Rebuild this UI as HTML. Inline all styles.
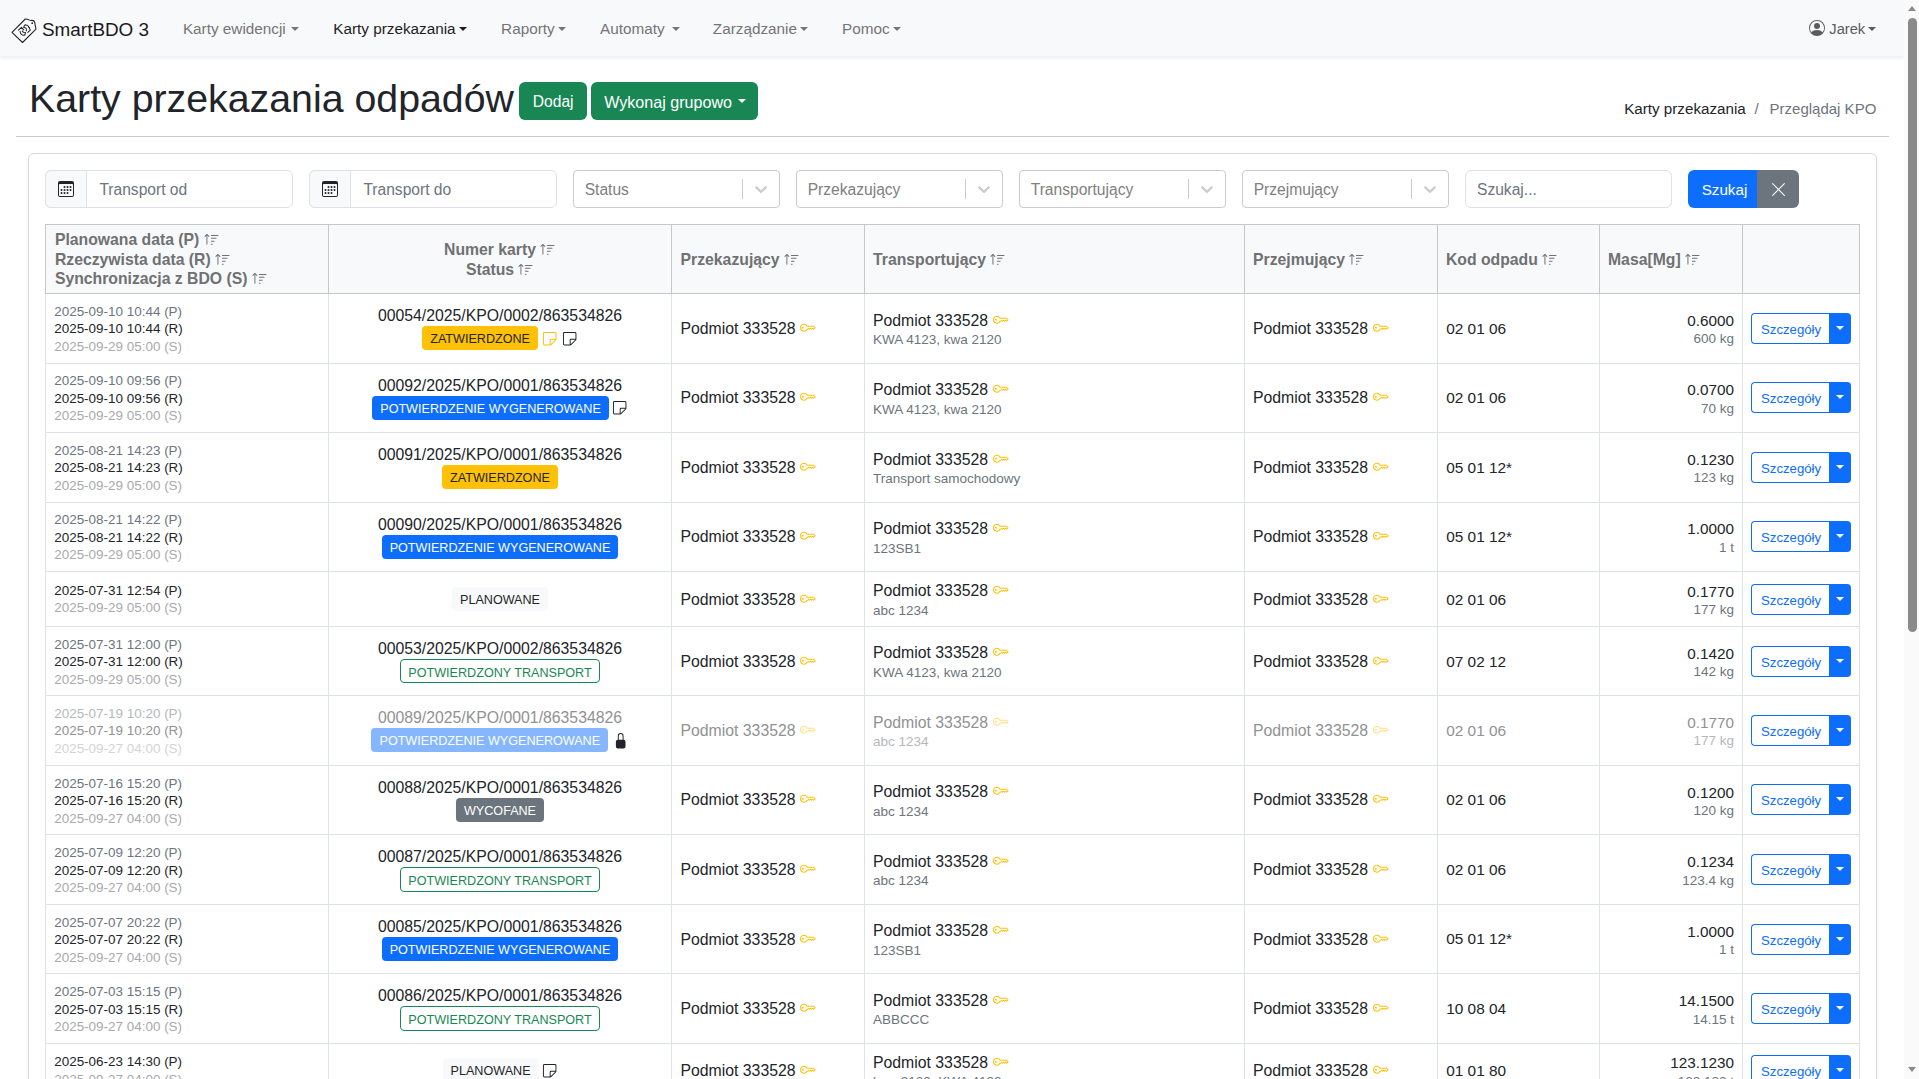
<!DOCTYPE html>
<html><head><meta charset="utf-8"><title>SmartBDO 3</title>
<style>
html,body{margin:0;padding:0;}
body{width:1919px;height:1079px;overflow:hidden;position:relative;background:#fff;font-family:"Liberation Sans", sans-serif;}
.t{position:absolute;white-space:nowrap;}
.badge{display:inline-block;box-sizing:border-box;height:24.4px;line-height:26px;padding:0 8px;font-size:12.6px;border-radius:4px;white-space:nowrap;flex:none}
svg{overflow:visible}
</style></head><body>
<div style="position:absolute;left:0px;top:0px;width:1904px;height:56px;background:#f8f9fa;box-shadow:0 2px 4px rgba(0,0,0,.075);"></div>
<svg style="position:absolute;left:0;top:0" width="48" height="56" viewBox="0 0 48 56" fill="none" stroke="#262626" stroke-width="1.1" stroke-linejoin="round" stroke-linecap="round">
<path d="M12 32.3 L25.3 19 Q26.6 18.8 28 19.4 Q29.5 20.6 31.5 20.4 Q34.2 20.2 34.8 22.4 Q34.9 25 35.7 27.2 Q35.9 28.6 35.7 29.3 L22.5 42.5 Z"/>
<circle cx="32.2" cy="23.2" r="0.9" fill="#262626" stroke="none"/>
<path d="M20.1 31.3 Q20.4 35 23.4 35.3 Q25.6 35.4 25.4 32.4 L23.5 32.3 Q22.6 31.9 22.3 31" stroke-width="1.05"/>
<path d="M18.4 30.2 L21.5 27.3 L23.7 29.9" stroke-width="1.05"/>
<path d="M23.9 27.4 Q23.8 24.6 26.4 24.9 Q28.6 25.3 29.4 28.2" stroke-width="1.05"/>
<path d="M29.0 27.4 L30.3 30.2 L27.8 32.4" stroke-width="1.05"/>
<path d="M24.1 27.5 Q25.9 27.6 26.3 28.6 L26.4 30.8" stroke-width="1.05"/>
</svg>
<div class="t" style="left:42px;top:17.65px;font-size:18.9px;line-height:24px;color:#1a1a1a;font-weight:400;">SmartBDO 3</div>
<div class="t" style="left:182.9px;top:19.10px;font-size:15.3px;line-height:19px;color:#747576;font-weight:400;">Karty ewidencji</div>
<div style="position:absolute;left:291.20000000000005px;top:26.5px;width:0;height:0;border-left:4.8px solid transparent;border-right:4.8px solid transparent;border-top:4.8px solid #747576"></div>
<div class="t" style="left:333.2px;top:19.10px;font-size:15.3px;line-height:19px;color:#1d1e1f;font-weight:400;">Karty przekazania</div>
<div style="position:absolute;left:458.90000000000003px;top:26.5px;width:0;height:0;border-left:4.8px solid transparent;border-right:4.8px solid transparent;border-top:4.8px solid #1d1e1f"></div>
<div class="t" style="left:501.1px;top:19.10px;font-size:15.3px;line-height:19px;color:#747576;font-weight:400;">Raporty</div>
<div style="position:absolute;left:558.3000000000001px;top:26.5px;width:0;height:0;border-left:4.8px solid transparent;border-right:4.8px solid transparent;border-top:4.8px solid #747576"></div>
<div class="t" style="left:600px;top:19.10px;font-size:15.3px;line-height:19px;color:#747576;font-weight:400;">Automaty</div>
<div style="position:absolute;left:671.8000000000001px;top:26.5px;width:0;height:0;border-left:4.8px solid transparent;border-right:4.8px solid transparent;border-top:4.8px solid #747576"></div>
<div class="t" style="left:712.8px;top:19.10px;font-size:15.3px;line-height:19px;color:#747576;font-weight:400;">Zarządzanie</div>
<div style="position:absolute;left:800.3000000000001px;top:26.5px;width:0;height:0;border-left:4.8px solid transparent;border-right:4.8px solid transparent;border-top:4.8px solid #747576"></div>
<div class="t" style="left:842px;top:19.10px;font-size:15.3px;line-height:19px;color:#747576;font-weight:400;">Pomoc</div>
<div style="position:absolute;left:893.2px;top:26.5px;width:0;height:0;border-left:4.8px solid transparent;border-right:4.8px solid transparent;border-top:4.8px solid #747576"></div>
<svg style="position:absolute;left:1809px;top:20px" width="16" height="16" viewBox="0 0 16 16" fill="#5b5c5d"><path d="M11 6a3 3 0 1 1-6 0 3 3 0 0 1 6 0"/><path fill-rule="evenodd" d="M0 8a8 8 0 1 1 16 0A8 8 0 0 1 0 8m8-7a7 7 0 0 0-5.468 11.37C3.242 11.226 4.805 10 8 10s4.757 1.225 5.468 2.37A7 7 0 0 0 8 1"/></svg>
<div class="t" style="left:1829.3px;top:19.91px;font-size:14.7px;line-height:18px;color:#5b5c5d;font-weight:400;">Jarek</div>
<div style="position:absolute;left:1868.3px;top:26.5px;width:0;height:0;border-left:4.6px solid transparent;border-right:4.6px solid transparent;border-top:4.6px solid #5b5c5d"></div>
<div style="position:absolute;left:1904px;top:0px;width:15px;height:1079px;background:#fafafa;"></div>
<div style="position:absolute;left:1908px;top:18px;width:9px;height:614px;background:#8a8a8a;border-radius:5px;"></div>
<div style="position:absolute;left:1908px;top:6px;width:0;height:0;border-left:4.5px solid transparent;border-right:4.5px solid transparent;border-bottom:5px solid #8a8a8a"></div>
<div style="position:absolute;left:1908px;top:1067px;width:0;height:0;border-left:4.5px solid transparent;border-right:4.5px solid transparent;border-top:5px solid #8a8a8a"></div>
<div class="t" style="left:29.0px;top:73.78px;font-size:39.3px;line-height:49px;color:#212529;font-weight:400;">Karty przekazania odpadów</div>
<div style="position:absolute;left:519px;top:82px;width:68px;height:38px;background:#198754;border-radius:6px;"></div>
<div class="t" style="left:532.8px;top:92.49px;font-size:15.6px;line-height:20px;color:#fff;font-weight:400;">Dodaj</div>
<div style="position:absolute;left:591px;top:82px;width:167px;height:38px;background:#198754;border-radius:6px;"></div>
<div class="t" style="left:604.2px;top:92.32px;font-size:16.1px;line-height:20px;color:#fff;font-weight:400;">Wykonaj grupowo</div>
<div style="position:absolute;left:738.3px;top:99px;width:0;height:0;border-left:4.8px solid transparent;border-right:4.8px solid transparent;border-top:4.8px solid #fff"></div>
<div class="t" style="left:1624.2px;top:98.98px;font-size:15.2px;line-height:19px;color:#212529;font-weight:400;">Karty przekazania</div>
<div class="t" style="left:1754.5px;top:98.98px;font-size:15.2px;line-height:19px;color:#6c757d;font-weight:400;">/</div>
<div class="t" style="right:42.700000000000045px;top:99.05px;font-size:15.0px;line-height:19px;color:#6c757d;font-weight:400;">Przeglądaj KPO</div>
<div style="position:absolute;left:16px;top:136px;width:1873px;height:1px;background:#c8c9ca;"></div>
<div style="position:absolute;left:28px;top:153px;width:1849px;height:1047px;border:1px solid #d9d9d9;border-radius:6px;box-sizing:border-box;box-shadow:0 2px 4px rgba(0,0,0,.05);"></div>
<div style="position:absolute;left:45px;top:170px;width:248px;height:38px;border:1px solid #dee2e6;border-radius:6px;box-sizing:border-box;background:#fff;"></div>
<div style="position:absolute;left:45px;top:170px;width:42px;height:38px;border:1px solid #dee2e6;border-radius:6px 0 0 6px;box-sizing:border-box;background:#f8f9fa;"></div>
<svg style="position:absolute;left:58px;top:181px" width="16" height="16" viewBox="0 0 16 16" fill="#212529"><path d="M14 0H2a2 2 0 0 0-2 2v12a2 2 0 0 0 2 2h12a2 2 0 0 0 2-2V2a2 2 0 0 0-2-2M1 3.857C1 3.384 1.448 3 2 3h12c.552 0 1 .384 1 .857v10.286c0 .473-.448.857-1 .857H2c-.552 0-1-.384-1-.857z"/><path d="M6.5 7a1 1 0 1 0 0-2 1 1 0 0 0 0 2m3 0a1 1 0 1 0 0-2 1 1 0 0 0 0 2m3 0a1 1 0 1 0 0-2 1 1 0 0 0 0 2m-9 3a1 1 0 1 0 0-2 1 1 0 0 0 0 2m3 0a1 1 0 1 0 0-2 1 1 0 0 0 0 2m3 0a1 1 0 1 0 0-2 1 1 0 0 0 0 2m3 0a1 1 0 1 0 0-2 1 1 0 0 0 0 2m-9 3a1 1 0 1 0 0-2 1 1 0 0 0 0 2m3 0a1 1 0 1 0 0-2 1 1 0 0 0 0 2m3 0a1 1 0 1 0 0-2 1 1 0 0 0 0 2"/></svg>
<div class="t" style="left:99.4px;top:179.59px;font-size:15.6px;line-height:20px;color:#6c757d;font-weight:400;">Transport od</div>
<div style="position:absolute;left:309px;top:170px;width:248px;height:38px;border:1px solid #dee2e6;border-radius:6px;box-sizing:border-box;background:#fff;"></div>
<div style="position:absolute;left:309px;top:170px;width:42px;height:38px;border:1px solid #dee2e6;border-radius:6px 0 0 6px;box-sizing:border-box;background:#f8f9fa;"></div>
<svg style="position:absolute;left:322px;top:181px" width="16" height="16" viewBox="0 0 16 16" fill="#212529"><path d="M14 0H2a2 2 0 0 0-2 2v12a2 2 0 0 0 2 2h12a2 2 0 0 0 2-2V2a2 2 0 0 0-2-2M1 3.857C1 3.384 1.448 3 2 3h12c.552 0 1 .384 1 .857v10.286c0 .473-.448.857-1 .857H2c-.552 0-1-.384-1-.857z"/><path d="M6.5 7a1 1 0 1 0 0-2 1 1 0 0 0 0 2m3 0a1 1 0 1 0 0-2 1 1 0 0 0 0 2m3 0a1 1 0 1 0 0-2 1 1 0 0 0 0 2m-9 3a1 1 0 1 0 0-2 1 1 0 0 0 0 2m3 0a1 1 0 1 0 0-2 1 1 0 0 0 0 2m3 0a1 1 0 1 0 0-2 1 1 0 0 0 0 2m3 0a1 1 0 1 0 0-2 1 1 0 0 0 0 2m-9 3a1 1 0 1 0 0-2 1 1 0 0 0 0 2m3 0a1 1 0 1 0 0-2 1 1 0 0 0 0 2m3 0a1 1 0 1 0 0-2 1 1 0 0 0 0 2"/></svg>
<div class="t" style="left:363.4px;top:179.59px;font-size:15.6px;line-height:20px;color:#6c757d;font-weight:400;">Transport do</div>
<div style="position:absolute;left:573px;top:170px;width:207px;height:38px;border:1px solid #cccccc;border-radius:4px;box-sizing:border-box;background:#fff;"></div>
<div class="t" style="left:584.7px;top:179.59px;font-size:15.6px;line-height:20px;color:#808080;font-weight:400;">Status</div>
<div style="position:absolute;left:742px;top:179px;width:1px;height:20px;background:#cccccc;"></div>
<svg style="position:absolute;left:751px;top:179px" width="20" height="20" viewBox="0 0 20 20" fill="#cccccc"><path d="M4.516 7.548c0.436-0.446 1.043-0.481 1.576 0l3.908 3.747 3.908-3.747c0.533-0.481 1.141-0.446 1.574 0 0.436 0.445 0.408 1.197 0 1.615-0.406 0.418-4.695 4.502-4.695 4.502-0.217 0.223-0.502 0.335-0.787 0.335s-0.57-0.112-0.789-0.335c0 0-4.287-4.084-4.695-4.502s-0.436-1.17 0-1.615z"/></svg>
<div style="position:absolute;left:796px;top:170px;width:207px;height:38px;border:1px solid #cccccc;border-radius:4px;box-sizing:border-box;background:#fff;"></div>
<div class="t" style="left:807.7px;top:179.59px;font-size:15.6px;line-height:20px;color:#808080;font-weight:400;">Przekazujący</div>
<div style="position:absolute;left:965px;top:179px;width:1px;height:20px;background:#cccccc;"></div>
<svg style="position:absolute;left:974px;top:179px" width="20" height="20" viewBox="0 0 20 20" fill="#cccccc"><path d="M4.516 7.548c0.436-0.446 1.043-0.481 1.576 0l3.908 3.747 3.908-3.747c0.533-0.481 1.141-0.446 1.574 0 0.436 0.445 0.408 1.197 0 1.615-0.406 0.418-4.695 4.502-4.695 4.502-0.217 0.223-0.502 0.335-0.787 0.335s-0.57-0.112-0.789-0.335c0 0-4.287-4.084-4.695-4.502s-0.436-1.17 0-1.615z"/></svg>
<div style="position:absolute;left:1019px;top:170px;width:207px;height:38px;border:1px solid #cccccc;border-radius:4px;box-sizing:border-box;background:#fff;"></div>
<div class="t" style="left:1030.7px;top:179.59px;font-size:15.6px;line-height:20px;color:#808080;font-weight:400;">Transportujący</div>
<div style="position:absolute;left:1188px;top:179px;width:1px;height:20px;background:#cccccc;"></div>
<svg style="position:absolute;left:1197px;top:179px" width="20" height="20" viewBox="0 0 20 20" fill="#cccccc"><path d="M4.516 7.548c0.436-0.446 1.043-0.481 1.576 0l3.908 3.747 3.908-3.747c0.533-0.481 1.141-0.446 1.574 0 0.436 0.445 0.408 1.197 0 1.615-0.406 0.418-4.695 4.502-4.695 4.502-0.217 0.223-0.502 0.335-0.787 0.335s-0.57-0.112-0.789-0.335c0 0-4.287-4.084-4.695-4.502s-0.436-1.17 0-1.615z"/></svg>
<div style="position:absolute;left:1242px;top:170px;width:207px;height:38px;border:1px solid #cccccc;border-radius:4px;box-sizing:border-box;background:#fff;"></div>
<div class="t" style="left:1253.7px;top:179.59px;font-size:15.6px;line-height:20px;color:#808080;font-weight:400;">Przejmujący</div>
<div style="position:absolute;left:1411px;top:179px;width:1px;height:20px;background:#cccccc;"></div>
<svg style="position:absolute;left:1420px;top:179px" width="20" height="20" viewBox="0 0 20 20" fill="#cccccc"><path d="M4.516 7.548c0.436-0.446 1.043-0.481 1.576 0l3.908 3.747 3.908-3.747c0.533-0.481 1.141-0.446 1.574 0 0.436 0.445 0.408 1.197 0 1.615-0.406 0.418-4.695 4.502-4.695 4.502-0.217 0.223-0.502 0.335-0.787 0.335s-0.57-0.112-0.789-0.335c0 0-4.287-4.084-4.695-4.502s-0.436-1.17 0-1.615z"/></svg>
<div style="position:absolute;left:1465px;top:170px;width:207px;height:38px;border:1px solid #dee2e6;border-radius:6px;box-sizing:border-box;background:#fff;"></div>
<div class="t" style="left:1477px;top:179.59px;font-size:15.6px;line-height:20px;color:#6c757d;font-weight:400;">Szukaj...</div>
<div style="position:absolute;left:1688px;top:170px;width:69px;height:38px;background:#0d6efd;border-radius:6px 0 0 6px;"></div>
<div class="t" style="left:1701.7px;top:180.23px;font-size:15.2px;line-height:19px;color:#fff;font-weight:400;">Szukaj</div>
<div style="position:absolute;left:1757px;top:170px;width:42px;height:38px;background:#6c757d;border-radius:0 6px 6px 0;"></div>
<svg style="position:absolute;left:1769.9px;top:180.5px" width="17" height="17" viewBox="0 0 16 16" fill="#fff"><path d="M2.146 2.854a.5.5 0 1 1 .708-.708L8 7.293l5.146-5.147a.5.5 0 0 1 .708.708L8.707 8l5.147 5.146a.5.5 0 0 1-.708.708L8 8.707l-5.146 5.147a.5.5 0 0 1-.708-.708L7.293 8z"/></svg>
<div style="position:absolute;left:45px;top:224px;width:1815px;height:69px;background:#f8f9fa;"></div>
<div style="position:absolute;left:45px;top:293px;width:1px;height:786px;background:#dee2e6;"></div>
<div style="position:absolute;left:328px;top:293px;width:1px;height:786px;background:#dee2e6;"></div>
<div style="position:absolute;left:671px;top:293px;width:1px;height:786px;background:#dee2e6;"></div>
<div style="position:absolute;left:864px;top:293px;width:1px;height:786px;background:#dee2e6;"></div>
<div style="position:absolute;left:1244px;top:293px;width:1px;height:786px;background:#dee2e6;"></div>
<div style="position:absolute;left:1437px;top:293px;width:1px;height:786px;background:#dee2e6;"></div>
<div style="position:absolute;left:1599px;top:293px;width:1px;height:786px;background:#dee2e6;"></div>
<div style="position:absolute;left:1742px;top:293px;width:1px;height:786px;background:#dee2e6;"></div>
<div style="position:absolute;left:1859px;top:293px;width:1px;height:786px;background:#dee2e6;"></div>
<div style="position:absolute;left:45px;top:363px;width:1815px;height:1px;background:#dee2e6;"></div>
<div style="position:absolute;left:45px;top:432px;width:1815px;height:1px;background:#dee2e6;"></div>
<div style="position:absolute;left:45px;top:502px;width:1815px;height:1px;background:#dee2e6;"></div>
<div style="position:absolute;left:45px;top:571px;width:1815px;height:1px;background:#dee2e6;"></div>
<div style="position:absolute;left:45px;top:626px;width:1815px;height:1px;background:#dee2e6;"></div>
<div style="position:absolute;left:45px;top:695px;width:1815px;height:1px;background:#dee2e6;"></div>
<div style="position:absolute;left:45px;top:765px;width:1815px;height:1px;background:#dee2e6;"></div>
<div style="position:absolute;left:45px;top:834px;width:1815px;height:1px;background:#dee2e6;"></div>
<div style="position:absolute;left:45px;top:904px;width:1815px;height:1px;background:#dee2e6;"></div>
<div style="position:absolute;left:45px;top:973px;width:1815px;height:1px;background:#dee2e6;"></div>
<div style="position:absolute;left:45px;top:1043px;width:1815px;height:1px;background:#dee2e6;"></div>
<div style="position:absolute;left:45px;top:1097px;width:1815px;height:1px;background:#dee2e6;"></div>
<div style="position:absolute;left:45px;top:224px;width:1px;height:69px;background:#c6c7c8;"></div>
<div style="position:absolute;left:328px;top:224px;width:1px;height:69px;background:#c6c7c8;"></div>
<div style="position:absolute;left:671px;top:224px;width:1px;height:69px;background:#c6c7c8;"></div>
<div style="position:absolute;left:864px;top:224px;width:1px;height:69px;background:#c6c7c8;"></div>
<div style="position:absolute;left:1244px;top:224px;width:1px;height:69px;background:#c6c7c8;"></div>
<div style="position:absolute;left:1437px;top:224px;width:1px;height:69px;background:#c6c7c8;"></div>
<div style="position:absolute;left:1599px;top:224px;width:1px;height:69px;background:#c6c7c8;"></div>
<div style="position:absolute;left:1742px;top:224px;width:1px;height:69px;background:#c6c7c8;"></div>
<div style="position:absolute;left:1859px;top:224px;width:1px;height:69px;background:#c6c7c8;"></div>
<div style="position:absolute;left:45px;top:224px;width:1815px;height:1px;background:#c6c7c8;"></div>
<div style="position:absolute;left:45px;top:293px;width:1815px;height:1px;background:#c6c7c8;"></div>
<div class="t" style="left:54.9px;top:229.94px;font-size:15.75px;line-height:20px;color:#6f7173;font-weight:700;">Planowana data (P)<svg width="15.6" height="15.6" viewBox="0 0 16 16" fill="#6f7173" style="vertical-align:-2.6px;margin-left:4.4px"><path d="M3.5 12.5a.5.5 0 0 1-1 0V3.707L1.354 4.854a.5.5 0 1 1-.708-.708l2-1.999.007-.007a.5.5 0 0 1 .7.006l2 2a.5.5 0 1 1-.707.708L3.5 3.707zm3.5-9a.5.5 0 0 1 .5-.5h7a.5.5 0 0 1 0 1h-7a.5.5 0 0 1-.5-.5M7.5 6a.5.5 0 0 0 0 1h5a.5.5 0 0 0 0-1zm0 3a.5.5 0 0 0 0 1h3a.5.5 0 0 0 0-1zm0 3a.5.5 0 0 0 0 1h1a.5.5 0 0 0 0-1z"/></svg></div>
<div class="t" style="left:54.9px;top:249.64px;font-size:15.75px;line-height:20px;color:#6f7173;font-weight:700;">Rzeczywista data (R)<svg width="15.6" height="15.6" viewBox="0 0 16 16" fill="#6f7173" style="vertical-align:-2.6px;margin-left:4.4px"><path d="M3.5 12.5a.5.5 0 0 1-1 0V3.707L1.354 4.854a.5.5 0 1 1-.708-.708l2-1.999.007-.007a.5.5 0 0 1 .7.006l2 2a.5.5 0 1 1-.707.708L3.5 3.707zm3.5-9a.5.5 0 0 1 .5-.5h7a.5.5 0 0 1 0 1h-7a.5.5 0 0 1-.5-.5M7.5 6a.5.5 0 0 0 0 1h5a.5.5 0 0 0 0-1zm0 3a.5.5 0 0 0 0 1h3a.5.5 0 0 0 0-1zm0 3a.5.5 0 0 0 0 1h1a.5.5 0 0 0 0-1z"/></svg></div>
<div class="t" style="left:54.9px;top:269.34px;font-size:15.75px;line-height:20px;color:#6f7173;font-weight:700;">Synchronizacja z BDO (S)<svg width="15.6" height="15.6" viewBox="0 0 16 16" fill="#6f7173" style="vertical-align:-2.6px;margin-left:4.4px"><path d="M3.5 12.5a.5.5 0 0 1-1 0V3.707L1.354 4.854a.5.5 0 1 1-.708-.708l2-1.999.007-.007a.5.5 0 0 1 .7.006l2 2a.5.5 0 1 1-.707.708L3.5 3.707zm3.5-9a.5.5 0 0 1 .5-.5h7a.5.5 0 0 1 0 1h-7a.5.5 0 0 1-.5-.5M7.5 6a.5.5 0 0 0 0 1h5a.5.5 0 0 0 0-1zm0 3a.5.5 0 0 0 0 1h3a.5.5 0 0 0 0-1zm0 3a.5.5 0 0 0 0 1h1a.5.5 0 0 0 0-1z"/></svg></div>
<div class="t" style="left:329px;width:342px;text-align:center;top:240.14px;font-size:15.75px;line-height:20px;color:#6f7173;font-weight:700;">Numer karty<svg width="15.6" height="15.6" viewBox="0 0 16 16" fill="#6f7173" style="vertical-align:-2.6px;margin-left:4.4px"><path d="M3.5 12.5a.5.5 0 0 1-1 0V3.707L1.354 4.854a.5.5 0 1 1-.708-.708l2-1.999.007-.007a.5.5 0 0 1 .7.006l2 2a.5.5 0 1 1-.707.708L3.5 3.707zm3.5-9a.5.5 0 0 1 .5-.5h7a.5.5 0 0 1 0 1h-7a.5.5 0 0 1-.5-.5M7.5 6a.5.5 0 0 0 0 1h5a.5.5 0 0 0 0-1zm0 3a.5.5 0 0 0 0 1h3a.5.5 0 0 0 0-1zm0 3a.5.5 0 0 0 0 1h1a.5.5 0 0 0 0-1z"/></svg></div>
<div class="t" style="left:329px;width:342px;text-align:center;top:259.94px;font-size:15.75px;line-height:20px;color:#6f7173;font-weight:700;">Status<svg width="15.6" height="15.6" viewBox="0 0 16 16" fill="#6f7173" style="vertical-align:-2.6px;margin-left:4.4px"><path d="M3.5 12.5a.5.5 0 0 1-1 0V3.707L1.354 4.854a.5.5 0 1 1-.708-.708l2-1.999.007-.007a.5.5 0 0 1 .7.006l2 2a.5.5 0 1 1-.707.708L3.5 3.707zm3.5-9a.5.5 0 0 1 .5-.5h7a.5.5 0 0 1 0 1h-7a.5.5 0 0 1-.5-.5M7.5 6a.5.5 0 0 0 0 1h5a.5.5 0 0 0 0-1zm0 3a.5.5 0 0 0 0 1h3a.5.5 0 0 0 0-1zm0 3a.5.5 0 0 0 0 1h1a.5.5 0 0 0 0-1z"/></svg></div>
<div class="t" style="left:680.6px;top:249.64px;font-size:15.75px;line-height:20px;color:#6f7173;font-weight:700;">Przekazujący<svg width="15.6" height="15.6" viewBox="0 0 16 16" fill="#6f7173" style="vertical-align:-2.6px;margin-left:4.4px"><path d="M3.5 12.5a.5.5 0 0 1-1 0V3.707L1.354 4.854a.5.5 0 1 1-.708-.708l2-1.999.007-.007a.5.5 0 0 1 .7.006l2 2a.5.5 0 1 1-.707.708L3.5 3.707zm3.5-9a.5.5 0 0 1 .5-.5h7a.5.5 0 0 1 0 1h-7a.5.5 0 0 1-.5-.5M7.5 6a.5.5 0 0 0 0 1h5a.5.5 0 0 0 0-1zm0 3a.5.5 0 0 0 0 1h3a.5.5 0 0 0 0-1zm0 3a.5.5 0 0 0 0 1h1a.5.5 0 0 0 0-1z"/></svg></div>
<div class="t" style="left:873px;top:249.64px;font-size:15.75px;line-height:20px;color:#6f7173;font-weight:700;">Transportujący<svg width="15.6" height="15.6" viewBox="0 0 16 16" fill="#6f7173" style="vertical-align:-2.6px;margin-left:4.4px"><path d="M3.5 12.5a.5.5 0 0 1-1 0V3.707L1.354 4.854a.5.5 0 1 1-.708-.708l2-1.999.007-.007a.5.5 0 0 1 .7.006l2 2a.5.5 0 1 1-.707.708L3.5 3.707zm3.5-9a.5.5 0 0 1 .5-.5h7a.5.5 0 0 1 0 1h-7a.5.5 0 0 1-.5-.5M7.5 6a.5.5 0 0 0 0 1h5a.5.5 0 0 0 0-1zm0 3a.5.5 0 0 0 0 1h3a.5.5 0 0 0 0-1zm0 3a.5.5 0 0 0 0 1h1a.5.5 0 0 0 0-1z"/></svg></div>
<div class="t" style="left:1253px;top:249.64px;font-size:15.75px;line-height:20px;color:#6f7173;font-weight:700;">Przejmujący<svg width="15.6" height="15.6" viewBox="0 0 16 16" fill="#6f7173" style="vertical-align:-2.6px;margin-left:4.4px"><path d="M3.5 12.5a.5.5 0 0 1-1 0V3.707L1.354 4.854a.5.5 0 1 1-.708-.708l2-1.999.007-.007a.5.5 0 0 1 .7.006l2 2a.5.5 0 1 1-.707.708L3.5 3.707zm3.5-9a.5.5 0 0 1 .5-.5h7a.5.5 0 0 1 0 1h-7a.5.5 0 0 1-.5-.5M7.5 6a.5.5 0 0 0 0 1h5a.5.5 0 0 0 0-1zm0 3a.5.5 0 0 0 0 1h3a.5.5 0 0 0 0-1zm0 3a.5.5 0 0 0 0 1h1a.5.5 0 0 0 0-1z"/></svg></div>
<div class="t" style="left:1446px;top:249.64px;font-size:15.75px;line-height:20px;color:#6f7173;font-weight:700;">Kod odpadu<svg width="15.6" height="15.6" viewBox="0 0 16 16" fill="#6f7173" style="vertical-align:-2.6px;margin-left:4.4px"><path d="M3.5 12.5a.5.5 0 0 1-1 0V3.707L1.354 4.854a.5.5 0 1 1-.708-.708l2-1.999.007-.007a.5.5 0 0 1 .7.006l2 2a.5.5 0 1 1-.707.708L3.5 3.707zm3.5-9a.5.5 0 0 1 .5-.5h7a.5.5 0 0 1 0 1h-7a.5.5 0 0 1-.5-.5M7.5 6a.5.5 0 0 0 0 1h5a.5.5 0 0 0 0-1zm0 3a.5.5 0 0 0 0 1h3a.5.5 0 0 0 0-1zm0 3a.5.5 0 0 0 0 1h1a.5.5 0 0 0 0-1z"/></svg></div>
<div class="t" style="left:1608px;top:249.64px;font-size:15.75px;line-height:20px;color:#6f7173;font-weight:700;">Masa[Mg]<svg width="15.6" height="15.6" viewBox="0 0 16 16" fill="#6f7173" style="vertical-align:-2.6px;margin-left:4.4px"><path d="M3.5 12.5a.5.5 0 0 1-1 0V3.707L1.354 4.854a.5.5 0 1 1-.708-.708l2-1.999.007-.007a.5.5 0 0 1 .7.006l2 2a.5.5 0 1 1-.707.708L3.5 3.707zm3.5-9a.5.5 0 0 1 .5-.5h7a.5.5 0 0 1 0 1h-7a.5.5 0 0 1-.5-.5M7.5 6a.5.5 0 0 0 0 1h5a.5.5 0 0 0 0-1zm0 3a.5.5 0 0 0 0 1h3a.5.5 0 0 0 0-1zm0 3a.5.5 0 0 0 0 1h1a.5.5 0 0 0 0-1z"/></svg></div>
<div class="t" style="left:54.2px;top:302.99px;font-size:13.46px;line-height:17px;color:#6c757d;font-weight:400;">2025-09-10 10:44 (P)</div>
<div class="t" style="left:54.2px;top:320.49px;font-size:13.46px;line-height:17px;color:#212529;font-weight:400;">2025-09-10 10:44 (R)</div>
<div class="t" style="left:54.2px;top:337.99px;font-size:13.46px;line-height:17px;color:#a8aaac;font-weight:400;">2025-09-29 05:00 (S)</div>
<div class="t" style="left:329px;width:342px;text-align:center;top:306.08px;font-size:15.8px;line-height:20px;color:#212529;font-weight:400;">00054/2025/KPO/0002/863534826</div>
<div style="position:absolute;left:329px;width:342px;top:326.05px;height:24.4px;display:flex;justify-content:center;align-items:center"><span class="badge" style="background:#ffc107;color:#212529;">ZATWIERDZONE</span><svg width="15.4" height="15.4" viewBox="0 0 16 16" fill="#ffc107" style="margin-left:3.5px;flex:none"><path d="M2.5 1A1.5 1.5 0 0 0 1 2.5v11A1.5 1.5 0 0 0 2.5 15h6.086a1.5 1.5 0 0 0 1.06-.44l4.915-4.914A1.5 1.5 0 0 0 15 8.586V2.5A1.5 1.5 0 0 0 13.5 1zM2 2.5a.5.5 0 0 1 .5-.5h11a.5.5 0 0 1 .5.5V8H9.5A1.5 1.5 0 0 0 8 9.5V14H2.5a.5.5 0 0 1-.5-.5zm7 11.293V9.5a.5.5 0 0 1 .5-.5h4.293z"/></svg><svg width="15.4" height="15.4" viewBox="0 0 16 16" fill="#212529" style="margin-left:5.5px;flex:none"><path d="M2.5 1A1.5 1.5 0 0 0 1 2.5v11A1.5 1.5 0 0 0 2.5 15h6.086a1.5 1.5 0 0 0 1.06-.44l4.915-4.914A1.5 1.5 0 0 0 15 8.586V2.5A1.5 1.5 0 0 0 13.5 1zM2 2.5a.5.5 0 0 1 .5-.5h11a.5.5 0 0 1 .5.5V8H9.5A1.5 1.5 0 0 0 8 9.5V14H2.5a.5.5 0 0 1-.5-.5zm7 11.293V9.5a.5.5 0 0 1 .5-.5h4.293z"/></svg></div>
<div class="t" style="left:680.5px;top:318.88px;font-size:15.8px;line-height:20px;color:#212529;font-weight:400;">Podmiot 333528<svg width="15.6" height="15.6" viewBox="0 0 16 16" fill="#ffc107" style="vertical-align:-1.6px;margin-left:4.8px"><path d="M0 8a4 4 0 0 1 7.465-2H14a.5.5 0 0 1 .354.146l1.5 1.5a.5.5 0 0 1 0 .708l-1.5 1.5a.5.5 0 0 1-.708 0L13 9.207l-.646.647a.5.5 0 0 1-.708 0L11 9.207l-.646.647a.5.5 0 0 1-.708 0L9 9.207l-.646.647A.5.5 0 0 1 8 10h-.535A4 4 0 0 1 0 8m4-3a3 3 0 1 0 2.712 4.285A.5.5 0 0 1 7.163 9h.63l.853-.854a.5.5 0 0 1 .708 0l.646.647.646-.647a.5.5 0 0 1 .708 0l.646.647.646-.647a.5.5 0 0 1 .708 0l.646.647.793-.793-1-1h-6.63a.5.5 0 0 1-.451-.285A3 3 0 0 0 4 5"/><path d="M4 8a1 1 0 1 1-2 0 1 1 0 0 1 2 0"/></svg></div>
<div class="t" style="left:1253px;top:318.88px;font-size:15.8px;line-height:20px;color:#212529;font-weight:400;">Podmiot 333528<svg width="15.6" height="15.6" viewBox="0 0 16 16" fill="#ffc107" style="vertical-align:-1.6px;margin-left:4.8px"><path d="M0 8a4 4 0 0 1 7.465-2H14a.5.5 0 0 1 .354.146l1.5 1.5a.5.5 0 0 1 0 .708l-1.5 1.5a.5.5 0 0 1-.708 0L13 9.207l-.646.647a.5.5 0 0 1-.708 0L11 9.207l-.646.647a.5.5 0 0 1-.708 0L9 9.207l-.646.647A.5.5 0 0 1 8 10h-.535A4 4 0 0 1 0 8m4-3a3 3 0 1 0 2.712 4.285A.5.5 0 0 1 7.163 9h.63l.853-.854a.5.5 0 0 1 .708 0l.646.647.646-.647a.5.5 0 0 1 .708 0l.646.647.646-.647a.5.5 0 0 1 .708 0l.646.647.793-.793-1-1h-6.63a.5.5 0 0 1-.451-.285A3 3 0 0 0 4 5"/><path d="M4 8a1 1 0 1 1-2 0 1 1 0 0 1 2 0"/></svg></div>
<div class="t" style="left:873px;top:310.68px;font-size:15.8px;line-height:20px;color:#212529;font-weight:400;">Podmiot 333528<svg width="15.6" height="15.6" viewBox="0 0 16 16" fill="#ffc107" style="vertical-align:-1.6px;margin-left:4.8px"><path d="M0 8a4 4 0 0 1 7.465-2H14a.5.5 0 0 1 .354.146l1.5 1.5a.5.5 0 0 1 0 .708l-1.5 1.5a.5.5 0 0 1-.708 0L13 9.207l-.646.647a.5.5 0 0 1-.708 0L11 9.207l-.646.647a.5.5 0 0 1-.708 0L9 9.207l-.646.647A.5.5 0 0 1 8 10h-.535A4 4 0 0 1 0 8m4-3a3 3 0 1 0 2.712 4.285A.5.5 0 0 1 7.163 9h.63l.853-.854a.5.5 0 0 1 .708 0l.646.647.646-.647a.5.5 0 0 1 .708 0l.646.647.646-.647a.5.5 0 0 1 .708 0l.646.647.793-.793-1-1h-6.63a.5.5 0 0 1-.451-.285A3 3 0 0 0 4 5"/><path d="M4 8a1 1 0 1 1-2 0 1 1 0 0 1 2 0"/></svg></div>
<div class="t" style="left:873px;top:331.17px;font-size:13.5px;line-height:17px;color:#6c757d;font-weight:400;">KWA 4123, kwa 2120</div>
<div class="t" style="left:1446.2px;top:318.81px;font-size:15.4px;line-height:19px;color:#212529;font-weight:400;">02 01 06</div>
<div class="t" style="right:185px;text-align:right;top:310.95px;font-size:15.3px;line-height:19px;color:#212529;font-weight:400;">0.6000</div>
<div class="t" style="right:185px;text-align:right;top:330.47px;font-size:13.5px;line-height:17px;color:#6c757d;font-weight:400;">600 kg</div>
<div style="position:absolute;left:1751px;top:312.85px;width:78px;height:31px;box-sizing:border-box;border:1px solid #0d6efd;border-right:none;border-radius:4px 0 0 4px;background:#fff"></div>
<div style="position:absolute;left:1829px;top:312.85px;width:22px;height:31px;background:#0d6efd;border-radius:0 4px 4px 0"></div>
<div class="t" style="left:1761px;top:321.88px;font-size:13.2px;line-height:16px;color:#0d6efd;font-weight:400;">Szczegóły</div>
<div style="position:absolute;left:1835.9px;top:325.84999999999997px;width:0;height:0;border-left:4.2px solid transparent;border-right:4.2px solid transparent;border-top:4.2px solid #fff"></div>
<div class="t" style="left:54.2px;top:372.49px;font-size:13.46px;line-height:17px;color:#6c757d;font-weight:400;">2025-09-10 09:56 (P)</div>
<div class="t" style="left:54.2px;top:389.99px;font-size:13.46px;line-height:17px;color:#212529;font-weight:400;">2025-09-10 09:56 (R)</div>
<div class="t" style="left:54.2px;top:407.49px;font-size:13.46px;line-height:17px;color:#a8aaac;font-weight:400;">2025-09-29 05:00 (S)</div>
<div class="t" style="left:329px;width:342px;text-align:center;top:375.58px;font-size:15.8px;line-height:20px;color:#212529;font-weight:400;">00092/2025/KPO/0001/863534826</div>
<div style="position:absolute;left:329px;width:342px;top:395.55px;height:24.4px;display:flex;justify-content:center;align-items:center"><span class="badge" style="background:#0d6efd;color:#fff;">POTWIERDZENIE WYGENEROWANE</span><svg width="15.4" height="15.4" viewBox="0 0 16 16" fill="#212529" style="margin-left:3.5px;flex:none"><path d="M2.5 1A1.5 1.5 0 0 0 1 2.5v11A1.5 1.5 0 0 0 2.5 15h6.086a1.5 1.5 0 0 0 1.06-.44l4.915-4.914A1.5 1.5 0 0 0 15 8.586V2.5A1.5 1.5 0 0 0 13.5 1zM2 2.5a.5.5 0 0 1 .5-.5h11a.5.5 0 0 1 .5.5V8H9.5A1.5 1.5 0 0 0 8 9.5V14H2.5a.5.5 0 0 1-.5-.5zm7 11.293V9.5a.5.5 0 0 1 .5-.5h4.293z"/></svg></div>
<div class="t" style="left:680.5px;top:388.38px;font-size:15.8px;line-height:20px;color:#212529;font-weight:400;">Podmiot 333528<svg width="15.6" height="15.6" viewBox="0 0 16 16" fill="#ffc107" style="vertical-align:-1.6px;margin-left:4.8px"><path d="M0 8a4 4 0 0 1 7.465-2H14a.5.5 0 0 1 .354.146l1.5 1.5a.5.5 0 0 1 0 .708l-1.5 1.5a.5.5 0 0 1-.708 0L13 9.207l-.646.647a.5.5 0 0 1-.708 0L11 9.207l-.646.647a.5.5 0 0 1-.708 0L9 9.207l-.646.647A.5.5 0 0 1 8 10h-.535A4 4 0 0 1 0 8m4-3a3 3 0 1 0 2.712 4.285A.5.5 0 0 1 7.163 9h.63l.853-.854a.5.5 0 0 1 .708 0l.646.647.646-.647a.5.5 0 0 1 .708 0l.646.647.646-.647a.5.5 0 0 1 .708 0l.646.647.793-.793-1-1h-6.63a.5.5 0 0 1-.451-.285A3 3 0 0 0 4 5"/><path d="M4 8a1 1 0 1 1-2 0 1 1 0 0 1 2 0"/></svg></div>
<div class="t" style="left:1253px;top:388.38px;font-size:15.8px;line-height:20px;color:#212529;font-weight:400;">Podmiot 333528<svg width="15.6" height="15.6" viewBox="0 0 16 16" fill="#ffc107" style="vertical-align:-1.6px;margin-left:4.8px"><path d="M0 8a4 4 0 0 1 7.465-2H14a.5.5 0 0 1 .354.146l1.5 1.5a.5.5 0 0 1 0 .708l-1.5 1.5a.5.5 0 0 1-.708 0L13 9.207l-.646.647a.5.5 0 0 1-.708 0L11 9.207l-.646.647a.5.5 0 0 1-.708 0L9 9.207l-.646.647A.5.5 0 0 1 8 10h-.535A4 4 0 0 1 0 8m4-3a3 3 0 1 0 2.712 4.285A.5.5 0 0 1 7.163 9h.63l.853-.854a.5.5 0 0 1 .708 0l.646.647.646-.647a.5.5 0 0 1 .708 0l.646.647.646-.647a.5.5 0 0 1 .708 0l.646.647.793-.793-1-1h-6.63a.5.5 0 0 1-.451-.285A3 3 0 0 0 4 5"/><path d="M4 8a1 1 0 1 1-2 0 1 1 0 0 1 2 0"/></svg></div>
<div class="t" style="left:873px;top:380.18px;font-size:15.8px;line-height:20px;color:#212529;font-weight:400;">Podmiot 333528<svg width="15.6" height="15.6" viewBox="0 0 16 16" fill="#ffc107" style="vertical-align:-1.6px;margin-left:4.8px"><path d="M0 8a4 4 0 0 1 7.465-2H14a.5.5 0 0 1 .354.146l1.5 1.5a.5.5 0 0 1 0 .708l-1.5 1.5a.5.5 0 0 1-.708 0L13 9.207l-.646.647a.5.5 0 0 1-.708 0L11 9.207l-.646.647a.5.5 0 0 1-.708 0L9 9.207l-.646.647A.5.5 0 0 1 8 10h-.535A4 4 0 0 1 0 8m4-3a3 3 0 1 0 2.712 4.285A.5.5 0 0 1 7.163 9h.63l.853-.854a.5.5 0 0 1 .708 0l.646.647.646-.647a.5.5 0 0 1 .708 0l.646.647.646-.647a.5.5 0 0 1 .708 0l.646.647.793-.793-1-1h-6.63a.5.5 0 0 1-.451-.285A3 3 0 0 0 4 5"/><path d="M4 8a1 1 0 1 1-2 0 1 1 0 0 1 2 0"/></svg></div>
<div class="t" style="left:873px;top:400.67px;font-size:13.5px;line-height:17px;color:#6c757d;font-weight:400;">KWA 4123, kwa 2120</div>
<div class="t" style="left:1446.2px;top:388.31px;font-size:15.4px;line-height:19px;color:#212529;font-weight:400;">02 01 06</div>
<div class="t" style="right:185px;text-align:right;top:380.45px;font-size:15.3px;line-height:19px;color:#212529;font-weight:400;">0.0700</div>
<div class="t" style="right:185px;text-align:right;top:399.97px;font-size:13.5px;line-height:17px;color:#6c757d;font-weight:400;">70 kg</div>
<div style="position:absolute;left:1751px;top:382.35px;width:78px;height:31px;box-sizing:border-box;border:1px solid #0d6efd;border-right:none;border-radius:4px 0 0 4px;background:#fff"></div>
<div style="position:absolute;left:1829px;top:382.35px;width:22px;height:31px;background:#0d6efd;border-radius:0 4px 4px 0"></div>
<div class="t" style="left:1761px;top:391.38px;font-size:13.2px;line-height:16px;color:#0d6efd;font-weight:400;">Szczegóły</div>
<div style="position:absolute;left:1835.9px;top:395.34999999999997px;width:0;height:0;border-left:4.2px solid transparent;border-right:4.2px solid transparent;border-top:4.2px solid #fff"></div>
<div class="t" style="left:54.2px;top:441.99px;font-size:13.46px;line-height:17px;color:#6c757d;font-weight:400;">2025-08-21 14:23 (P)</div>
<div class="t" style="left:54.2px;top:459.49px;font-size:13.46px;line-height:17px;color:#212529;font-weight:400;">2025-08-21 14:23 (R)</div>
<div class="t" style="left:54.2px;top:476.99px;font-size:13.46px;line-height:17px;color:#a8aaac;font-weight:400;">2025-09-29 05:00 (S)</div>
<div class="t" style="left:329px;width:342px;text-align:center;top:445.08px;font-size:15.8px;line-height:20px;color:#212529;font-weight:400;">00091/2025/KPO/0001/863534826</div>
<div style="position:absolute;left:329px;width:342px;top:465.05px;height:24.4px;display:flex;justify-content:center;align-items:center"><span class="badge" style="background:#ffc107;color:#212529;">ZATWIERDZONE</span></div>
<div class="t" style="left:680.5px;top:457.88px;font-size:15.8px;line-height:20px;color:#212529;font-weight:400;">Podmiot 333528<svg width="15.6" height="15.6" viewBox="0 0 16 16" fill="#ffc107" style="vertical-align:-1.6px;margin-left:4.8px"><path d="M0 8a4 4 0 0 1 7.465-2H14a.5.5 0 0 1 .354.146l1.5 1.5a.5.5 0 0 1 0 .708l-1.5 1.5a.5.5 0 0 1-.708 0L13 9.207l-.646.647a.5.5 0 0 1-.708 0L11 9.207l-.646.647a.5.5 0 0 1-.708 0L9 9.207l-.646.647A.5.5 0 0 1 8 10h-.535A4 4 0 0 1 0 8m4-3a3 3 0 1 0 2.712 4.285A.5.5 0 0 1 7.163 9h.63l.853-.854a.5.5 0 0 1 .708 0l.646.647.646-.647a.5.5 0 0 1 .708 0l.646.647.646-.647a.5.5 0 0 1 .708 0l.646.647.793-.793-1-1h-6.63a.5.5 0 0 1-.451-.285A3 3 0 0 0 4 5"/><path d="M4 8a1 1 0 1 1-2 0 1 1 0 0 1 2 0"/></svg></div>
<div class="t" style="left:1253px;top:457.88px;font-size:15.8px;line-height:20px;color:#212529;font-weight:400;">Podmiot 333528<svg width="15.6" height="15.6" viewBox="0 0 16 16" fill="#ffc107" style="vertical-align:-1.6px;margin-left:4.8px"><path d="M0 8a4 4 0 0 1 7.465-2H14a.5.5 0 0 1 .354.146l1.5 1.5a.5.5 0 0 1 0 .708l-1.5 1.5a.5.5 0 0 1-.708 0L13 9.207l-.646.647a.5.5 0 0 1-.708 0L11 9.207l-.646.647a.5.5 0 0 1-.708 0L9 9.207l-.646.647A.5.5 0 0 1 8 10h-.535A4 4 0 0 1 0 8m4-3a3 3 0 1 0 2.712 4.285A.5.5 0 0 1 7.163 9h.63l.853-.854a.5.5 0 0 1 .708 0l.646.647.646-.647a.5.5 0 0 1 .708 0l.646.647.646-.647a.5.5 0 0 1 .708 0l.646.647.793-.793-1-1h-6.63a.5.5 0 0 1-.451-.285A3 3 0 0 0 4 5"/><path d="M4 8a1 1 0 1 1-2 0 1 1 0 0 1 2 0"/></svg></div>
<div class="t" style="left:873px;top:449.68px;font-size:15.8px;line-height:20px;color:#212529;font-weight:400;">Podmiot 333528<svg width="15.6" height="15.6" viewBox="0 0 16 16" fill="#ffc107" style="vertical-align:-1.6px;margin-left:4.8px"><path d="M0 8a4 4 0 0 1 7.465-2H14a.5.5 0 0 1 .354.146l1.5 1.5a.5.5 0 0 1 0 .708l-1.5 1.5a.5.5 0 0 1-.708 0L13 9.207l-.646.647a.5.5 0 0 1-.708 0L11 9.207l-.646.647a.5.5 0 0 1-.708 0L9 9.207l-.646.647A.5.5 0 0 1 8 10h-.535A4 4 0 0 1 0 8m4-3a3 3 0 1 0 2.712 4.285A.5.5 0 0 1 7.163 9h.63l.853-.854a.5.5 0 0 1 .708 0l.646.647.646-.647a.5.5 0 0 1 .708 0l.646.647.646-.647a.5.5 0 0 1 .708 0l.646.647.793-.793-1-1h-6.63a.5.5 0 0 1-.451-.285A3 3 0 0 0 4 5"/><path d="M4 8a1 1 0 1 1-2 0 1 1 0 0 1 2 0"/></svg></div>
<div class="t" style="left:873px;top:470.17px;font-size:13.5px;line-height:17px;color:#6c757d;font-weight:400;">Transport samochodowy</div>
<div class="t" style="left:1446.2px;top:457.81px;font-size:15.4px;line-height:19px;color:#212529;font-weight:400;">05 01 12*</div>
<div class="t" style="right:185px;text-align:right;top:449.95px;font-size:15.3px;line-height:19px;color:#212529;font-weight:400;">0.1230</div>
<div class="t" style="right:185px;text-align:right;top:469.47px;font-size:13.5px;line-height:17px;color:#6c757d;font-weight:400;">123 kg</div>
<div style="position:absolute;left:1751px;top:451.85px;width:78px;height:31px;box-sizing:border-box;border:1px solid #0d6efd;border-right:none;border-radius:4px 0 0 4px;background:#fff"></div>
<div style="position:absolute;left:1829px;top:451.85px;width:22px;height:31px;background:#0d6efd;border-radius:0 4px 4px 0"></div>
<div class="t" style="left:1761px;top:460.88px;font-size:13.2px;line-height:16px;color:#0d6efd;font-weight:400;">Szczegóły</div>
<div style="position:absolute;left:1835.9px;top:464.84999999999997px;width:0;height:0;border-left:4.2px solid transparent;border-right:4.2px solid transparent;border-top:4.2px solid #fff"></div>
<div class="t" style="left:54.2px;top:511.49px;font-size:13.46px;line-height:17px;color:#6c757d;font-weight:400;">2025-08-21 14:22 (P)</div>
<div class="t" style="left:54.2px;top:528.99px;font-size:13.46px;line-height:17px;color:#212529;font-weight:400;">2025-08-21 14:22 (R)</div>
<div class="t" style="left:54.2px;top:546.49px;font-size:13.46px;line-height:17px;color:#a8aaac;font-weight:400;">2025-09-29 05:00 (S)</div>
<div class="t" style="left:329px;width:342px;text-align:center;top:514.58px;font-size:15.8px;line-height:20px;color:#212529;font-weight:400;">00090/2025/KPO/0001/863534826</div>
<div style="position:absolute;left:329px;width:342px;top:534.55px;height:24.4px;display:flex;justify-content:center;align-items:center"><span class="badge" style="background:#0d6efd;color:#fff;">POTWIERDZENIE WYGENEROWANE</span></div>
<div class="t" style="left:680.5px;top:527.38px;font-size:15.8px;line-height:20px;color:#212529;font-weight:400;">Podmiot 333528<svg width="15.6" height="15.6" viewBox="0 0 16 16" fill="#ffc107" style="vertical-align:-1.6px;margin-left:4.8px"><path d="M0 8a4 4 0 0 1 7.465-2H14a.5.5 0 0 1 .354.146l1.5 1.5a.5.5 0 0 1 0 .708l-1.5 1.5a.5.5 0 0 1-.708 0L13 9.207l-.646.647a.5.5 0 0 1-.708 0L11 9.207l-.646.647a.5.5 0 0 1-.708 0L9 9.207l-.646.647A.5.5 0 0 1 8 10h-.535A4 4 0 0 1 0 8m4-3a3 3 0 1 0 2.712 4.285A.5.5 0 0 1 7.163 9h.63l.853-.854a.5.5 0 0 1 .708 0l.646.647.646-.647a.5.5 0 0 1 .708 0l.646.647.646-.647a.5.5 0 0 1 .708 0l.646.647.793-.793-1-1h-6.63a.5.5 0 0 1-.451-.285A3 3 0 0 0 4 5"/><path d="M4 8a1 1 0 1 1-2 0 1 1 0 0 1 2 0"/></svg></div>
<div class="t" style="left:1253px;top:527.38px;font-size:15.8px;line-height:20px;color:#212529;font-weight:400;">Podmiot 333528<svg width="15.6" height="15.6" viewBox="0 0 16 16" fill="#ffc107" style="vertical-align:-1.6px;margin-left:4.8px"><path d="M0 8a4 4 0 0 1 7.465-2H14a.5.5 0 0 1 .354.146l1.5 1.5a.5.5 0 0 1 0 .708l-1.5 1.5a.5.5 0 0 1-.708 0L13 9.207l-.646.647a.5.5 0 0 1-.708 0L11 9.207l-.646.647a.5.5 0 0 1-.708 0L9 9.207l-.646.647A.5.5 0 0 1 8 10h-.535A4 4 0 0 1 0 8m4-3a3 3 0 1 0 2.712 4.285A.5.5 0 0 1 7.163 9h.63l.853-.854a.5.5 0 0 1 .708 0l.646.647.646-.647a.5.5 0 0 1 .708 0l.646.647.646-.647a.5.5 0 0 1 .708 0l.646.647.793-.793-1-1h-6.63a.5.5 0 0 1-.451-.285A3 3 0 0 0 4 5"/><path d="M4 8a1 1 0 1 1-2 0 1 1 0 0 1 2 0"/></svg></div>
<div class="t" style="left:873px;top:519.18px;font-size:15.8px;line-height:20px;color:#212529;font-weight:400;">Podmiot 333528<svg width="15.6" height="15.6" viewBox="0 0 16 16" fill="#ffc107" style="vertical-align:-1.6px;margin-left:4.8px"><path d="M0 8a4 4 0 0 1 7.465-2H14a.5.5 0 0 1 .354.146l1.5 1.5a.5.5 0 0 1 0 .708l-1.5 1.5a.5.5 0 0 1-.708 0L13 9.207l-.646.647a.5.5 0 0 1-.708 0L11 9.207l-.646.647a.5.5 0 0 1-.708 0L9 9.207l-.646.647A.5.5 0 0 1 8 10h-.535A4 4 0 0 1 0 8m4-3a3 3 0 1 0 2.712 4.285A.5.5 0 0 1 7.163 9h.63l.853-.854a.5.5 0 0 1 .708 0l.646.647.646-.647a.5.5 0 0 1 .708 0l.646.647.646-.647a.5.5 0 0 1 .708 0l.646.647.793-.793-1-1h-6.63a.5.5 0 0 1-.451-.285A3 3 0 0 0 4 5"/><path d="M4 8a1 1 0 1 1-2 0 1 1 0 0 1 2 0"/></svg></div>
<div class="t" style="left:873px;top:539.67px;font-size:13.5px;line-height:17px;color:#6c757d;font-weight:400;">123SB1</div>
<div class="t" style="left:1446.2px;top:527.31px;font-size:15.4px;line-height:19px;color:#212529;font-weight:400;">05 01 12*</div>
<div class="t" style="right:185px;text-align:right;top:519.45px;font-size:15.3px;line-height:19px;color:#212529;font-weight:400;">1.0000</div>
<div class="t" style="right:185px;text-align:right;top:538.97px;font-size:13.5px;line-height:17px;color:#6c757d;font-weight:400;">1 t</div>
<div style="position:absolute;left:1751px;top:521.35px;width:78px;height:31px;box-sizing:border-box;border:1px solid #0d6efd;border-right:none;border-radius:4px 0 0 4px;background:#fff"></div>
<div style="position:absolute;left:1829px;top:521.35px;width:22px;height:31px;background:#0d6efd;border-radius:0 4px 4px 0"></div>
<div class="t" style="left:1761px;top:530.38px;font-size:13.2px;line-height:16px;color:#0d6efd;font-weight:400;">Szczegóły</div>
<div style="position:absolute;left:1835.9px;top:534.35px;width:0;height:0;border-left:4.2px solid transparent;border-right:4.2px solid transparent;border-top:4.2px solid #fff"></div>
<div class="t" style="left:54.2px;top:581.99px;font-size:13.46px;line-height:17px;color:#212529;font-weight:400;">2025-07-31 12:54 (P)</div>
<div class="t" style="left:54.2px;top:599.49px;font-size:13.46px;line-height:17px;color:#a8aaac;font-weight:400;">2025-09-29 05:00 (S)</div>
<div style="position:absolute;left:329px;width:342px;top:586.70px;height:24.4px;display:flex;justify-content:center;align-items:center"><span class="badge" style="background:#f8f9fa;color:#212529;">PLANOWANE</span></div>
<div class="t" style="left:680.5px;top:589.63px;font-size:15.8px;line-height:20px;color:#212529;font-weight:400;">Podmiot 333528<svg width="15.6" height="15.6" viewBox="0 0 16 16" fill="#ffc107" style="vertical-align:-1.6px;margin-left:4.8px"><path d="M0 8a4 4 0 0 1 7.465-2H14a.5.5 0 0 1 .354.146l1.5 1.5a.5.5 0 0 1 0 .708l-1.5 1.5a.5.5 0 0 1-.708 0L13 9.207l-.646.647a.5.5 0 0 1-.708 0L11 9.207l-.646.647a.5.5 0 0 1-.708 0L9 9.207l-.646.647A.5.5 0 0 1 8 10h-.535A4 4 0 0 1 0 8m4-3a3 3 0 1 0 2.712 4.285A.5.5 0 0 1 7.163 9h.63l.853-.854a.5.5 0 0 1 .708 0l.646.647.646-.647a.5.5 0 0 1 .708 0l.646.647.646-.647a.5.5 0 0 1 .708 0l.646.647.793-.793-1-1h-6.63a.5.5 0 0 1-.451-.285A3 3 0 0 0 4 5"/><path d="M4 8a1 1 0 1 1-2 0 1 1 0 0 1 2 0"/></svg></div>
<div class="t" style="left:1253px;top:589.63px;font-size:15.8px;line-height:20px;color:#212529;font-weight:400;">Podmiot 333528<svg width="15.6" height="15.6" viewBox="0 0 16 16" fill="#ffc107" style="vertical-align:-1.6px;margin-left:4.8px"><path d="M0 8a4 4 0 0 1 7.465-2H14a.5.5 0 0 1 .354.146l1.5 1.5a.5.5 0 0 1 0 .708l-1.5 1.5a.5.5 0 0 1-.708 0L13 9.207l-.646.647a.5.5 0 0 1-.708 0L11 9.207l-.646.647a.5.5 0 0 1-.708 0L9 9.207l-.646.647A.5.5 0 0 1 8 10h-.535A4 4 0 0 1 0 8m4-3a3 3 0 1 0 2.712 4.285A.5.5 0 0 1 7.163 9h.63l.853-.854a.5.5 0 0 1 .708 0l.646.647.646-.647a.5.5 0 0 1 .708 0l.646.647.646-.647a.5.5 0 0 1 .708 0l.646.647.793-.793-1-1h-6.63a.5.5 0 0 1-.451-.285A3 3 0 0 0 4 5"/><path d="M4 8a1 1 0 1 1-2 0 1 1 0 0 1 2 0"/></svg></div>
<div class="t" style="left:873px;top:581.43px;font-size:15.8px;line-height:20px;color:#212529;font-weight:400;">Podmiot 333528<svg width="15.6" height="15.6" viewBox="0 0 16 16" fill="#ffc107" style="vertical-align:-1.6px;margin-left:4.8px"><path d="M0 8a4 4 0 0 1 7.465-2H14a.5.5 0 0 1 .354.146l1.5 1.5a.5.5 0 0 1 0 .708l-1.5 1.5a.5.5 0 0 1-.708 0L13 9.207l-.646.647a.5.5 0 0 1-.708 0L11 9.207l-.646.647a.5.5 0 0 1-.708 0L9 9.207l-.646.647A.5.5 0 0 1 8 10h-.535A4 4 0 0 1 0 8m4-3a3 3 0 1 0 2.712 4.285A.5.5 0 0 1 7.163 9h.63l.853-.854a.5.5 0 0 1 .708 0l.646.647.646-.647a.5.5 0 0 1 .708 0l.646.647.646-.647a.5.5 0 0 1 .708 0l.646.647.793-.793-1-1h-6.63a.5.5 0 0 1-.451-.285A3 3 0 0 0 4 5"/><path d="M4 8a1 1 0 1 1-2 0 1 1 0 0 1 2 0"/></svg></div>
<div class="t" style="left:873px;top:601.92px;font-size:13.5px;line-height:17px;color:#6c757d;font-weight:400;">abc 1234</div>
<div class="t" style="left:1446.2px;top:589.56px;font-size:15.4px;line-height:19px;color:#212529;font-weight:400;">02 01 06</div>
<div class="t" style="right:185px;text-align:right;top:581.70px;font-size:15.3px;line-height:19px;color:#212529;font-weight:400;">0.1770</div>
<div class="t" style="right:185px;text-align:right;top:601.22px;font-size:13.5px;line-height:17px;color:#6c757d;font-weight:400;">177 kg</div>
<div style="position:absolute;left:1751px;top:583.60px;width:78px;height:31px;box-sizing:border-box;border:1px solid #0d6efd;border-right:none;border-radius:4px 0 0 4px;background:#fff"></div>
<div style="position:absolute;left:1829px;top:583.60px;width:22px;height:31px;background:#0d6efd;border-radius:0 4px 4px 0"></div>
<div class="t" style="left:1761px;top:592.63px;font-size:13.2px;line-height:16px;color:#0d6efd;font-weight:400;">Szczegóły</div>
<div style="position:absolute;left:1835.9px;top:596.6px;width:0;height:0;border-left:4.2px solid transparent;border-right:4.2px solid transparent;border-top:4.2px solid #fff"></div>
<div class="t" style="left:54.2px;top:635.74px;font-size:13.46px;line-height:17px;color:#6c757d;font-weight:400;">2025-07-31 12:00 (P)</div>
<div class="t" style="left:54.2px;top:653.24px;font-size:13.46px;line-height:17px;color:#212529;font-weight:400;">2025-07-31 12:00 (R)</div>
<div class="t" style="left:54.2px;top:670.74px;font-size:13.46px;line-height:17px;color:#a8aaac;font-weight:400;">2025-09-29 05:00 (S)</div>
<div class="t" style="left:329px;width:342px;text-align:center;top:638.83px;font-size:15.8px;line-height:20px;color:#212529;font-weight:400;">00053/2025/KPO/0002/863534826</div>
<div style="position:absolute;left:329px;width:342px;top:658.80px;height:24.4px;display:flex;justify-content:center;align-items:center"><span class="badge" style="background:#fff;color:#198754;border:1px solid #198754;padding:0 7px !important;">POTWIERDZONY TRANSPORT</span></div>
<div class="t" style="left:680.5px;top:651.63px;font-size:15.8px;line-height:20px;color:#212529;font-weight:400;">Podmiot 333528<svg width="15.6" height="15.6" viewBox="0 0 16 16" fill="#ffc107" style="vertical-align:-1.6px;margin-left:4.8px"><path d="M0 8a4 4 0 0 1 7.465-2H14a.5.5 0 0 1 .354.146l1.5 1.5a.5.5 0 0 1 0 .708l-1.5 1.5a.5.5 0 0 1-.708 0L13 9.207l-.646.647a.5.5 0 0 1-.708 0L11 9.207l-.646.647a.5.5 0 0 1-.708 0L9 9.207l-.646.647A.5.5 0 0 1 8 10h-.535A4 4 0 0 1 0 8m4-3a3 3 0 1 0 2.712 4.285A.5.5 0 0 1 7.163 9h.63l.853-.854a.5.5 0 0 1 .708 0l.646.647.646-.647a.5.5 0 0 1 .708 0l.646.647.646-.647a.5.5 0 0 1 .708 0l.646.647.793-.793-1-1h-6.63a.5.5 0 0 1-.451-.285A3 3 0 0 0 4 5"/><path d="M4 8a1 1 0 1 1-2 0 1 1 0 0 1 2 0"/></svg></div>
<div class="t" style="left:1253px;top:651.63px;font-size:15.8px;line-height:20px;color:#212529;font-weight:400;">Podmiot 333528<svg width="15.6" height="15.6" viewBox="0 0 16 16" fill="#ffc107" style="vertical-align:-1.6px;margin-left:4.8px"><path d="M0 8a4 4 0 0 1 7.465-2H14a.5.5 0 0 1 .354.146l1.5 1.5a.5.5 0 0 1 0 .708l-1.5 1.5a.5.5 0 0 1-.708 0L13 9.207l-.646.647a.5.5 0 0 1-.708 0L11 9.207l-.646.647a.5.5 0 0 1-.708 0L9 9.207l-.646.647A.5.5 0 0 1 8 10h-.535A4 4 0 0 1 0 8m4-3a3 3 0 1 0 2.712 4.285A.5.5 0 0 1 7.163 9h.63l.853-.854a.5.5 0 0 1 .708 0l.646.647.646-.647a.5.5 0 0 1 .708 0l.646.647.646-.647a.5.5 0 0 1 .708 0l.646.647.793-.793-1-1h-6.63a.5.5 0 0 1-.451-.285A3 3 0 0 0 4 5"/><path d="M4 8a1 1 0 1 1-2 0 1 1 0 0 1 2 0"/></svg></div>
<div class="t" style="left:873px;top:643.43px;font-size:15.8px;line-height:20px;color:#212529;font-weight:400;">Podmiot 333528<svg width="15.6" height="15.6" viewBox="0 0 16 16" fill="#ffc107" style="vertical-align:-1.6px;margin-left:4.8px"><path d="M0 8a4 4 0 0 1 7.465-2H14a.5.5 0 0 1 .354.146l1.5 1.5a.5.5 0 0 1 0 .708l-1.5 1.5a.5.5 0 0 1-.708 0L13 9.207l-.646.647a.5.5 0 0 1-.708 0L11 9.207l-.646.647a.5.5 0 0 1-.708 0L9 9.207l-.646.647A.5.5 0 0 1 8 10h-.535A4 4 0 0 1 0 8m4-3a3 3 0 1 0 2.712 4.285A.5.5 0 0 1 7.163 9h.63l.853-.854a.5.5 0 0 1 .708 0l.646.647.646-.647a.5.5 0 0 1 .708 0l.646.647.646-.647a.5.5 0 0 1 .708 0l.646.647.793-.793-1-1h-6.63a.5.5 0 0 1-.451-.285A3 3 0 0 0 4 5"/><path d="M4 8a1 1 0 1 1-2 0 1 1 0 0 1 2 0"/></svg></div>
<div class="t" style="left:873px;top:663.92px;font-size:13.5px;line-height:17px;color:#6c757d;font-weight:400;">KWA 4123, kwa 2120</div>
<div class="t" style="left:1446.2px;top:651.56px;font-size:15.4px;line-height:19px;color:#212529;font-weight:400;">07 02 12</div>
<div class="t" style="right:185px;text-align:right;top:643.70px;font-size:15.3px;line-height:19px;color:#212529;font-weight:400;">0.1420</div>
<div class="t" style="right:185px;text-align:right;top:663.22px;font-size:13.5px;line-height:17px;color:#6c757d;font-weight:400;">142 kg</div>
<div style="position:absolute;left:1751px;top:645.60px;width:78px;height:31px;box-sizing:border-box;border:1px solid #0d6efd;border-right:none;border-radius:4px 0 0 4px;background:#fff"></div>
<div style="position:absolute;left:1829px;top:645.60px;width:22px;height:31px;background:#0d6efd;border-radius:0 4px 4px 0"></div>
<div class="t" style="left:1761px;top:654.63px;font-size:13.2px;line-height:16px;color:#0d6efd;font-weight:400;">Szczegóły</div>
<div style="position:absolute;left:1835.9px;top:658.6px;width:0;height:0;border-left:4.2px solid transparent;border-right:4.2px solid transparent;border-top:4.2px solid #fff"></div>
<div class="t" style="left:54.2px;top:704.99px;font-size:13.46px;line-height:17px;color:#b5b8bb;font-weight:400;">2025-07-19 10:20 (P)</div>
<div class="t" style="left:54.2px;top:722.49px;font-size:13.46px;line-height:17px;color:#909294;font-weight:400;">2025-07-19 10:20 (R)</div>
<div class="t" style="left:54.2px;top:739.99px;font-size:13.46px;line-height:17px;color:#d3d4d5;font-weight:400;">2025-09-27 04:00 (S)</div>
<div class="t" style="left:329px;width:342px;text-align:center;top:708.08px;font-size:15.8px;line-height:20px;color:#909294;font-weight:400;">00089/2025/KPO/0001/863534826</div>
<div style="position:absolute;left:329px;width:342px;top:728.05px;height:24.4px;display:flex;justify-content:center;align-items:center"><span class="badge" style="background:#86b7fe;color:#fff;">POTWIERDZENIE WYGENEROWANE</span><svg width="15.4" height="15.4" viewBox="0 0 16 16" fill="#212529" style="margin-left:5px;flex:none"><path d="M8 1a2 2 0 0 1 2 2v4H6V3a2 2 0 0 1 2-2m3 6V3a3 3 0 0 0-6 0v4a2 2 0 0 0-2 2v5a2 2 0 0 0 2 2h6a2 2 0 0 0 2-2V9a2 2 0 0 0-2-2"/></svg></div>
<div class="t" style="left:680.5px;top:720.88px;font-size:15.8px;line-height:20px;color:#909294;font-weight:400;">Podmiot 333528<svg width="15.6" height="15.6" viewBox="0 0 16 16" fill="#ffe083" style="vertical-align:-1.6px;margin-left:4.8px"><path d="M0 8a4 4 0 0 1 7.465-2H14a.5.5 0 0 1 .354.146l1.5 1.5a.5.5 0 0 1 0 .708l-1.5 1.5a.5.5 0 0 1-.708 0L13 9.207l-.646.647a.5.5 0 0 1-.708 0L11 9.207l-.646.647a.5.5 0 0 1-.708 0L9 9.207l-.646.647A.5.5 0 0 1 8 10h-.535A4 4 0 0 1 0 8m4-3a3 3 0 1 0 2.712 4.285A.5.5 0 0 1 7.163 9h.63l.853-.854a.5.5 0 0 1 .708 0l.646.647.646-.647a.5.5 0 0 1 .708 0l.646.647.646-.647a.5.5 0 0 1 .708 0l.646.647.793-.793-1-1h-6.63a.5.5 0 0 1-.451-.285A3 3 0 0 0 4 5"/><path d="M4 8a1 1 0 1 1-2 0 1 1 0 0 1 2 0"/></svg></div>
<div class="t" style="left:1253px;top:720.88px;font-size:15.8px;line-height:20px;color:#909294;font-weight:400;">Podmiot 333528<svg width="15.6" height="15.6" viewBox="0 0 16 16" fill="#ffe083" style="vertical-align:-1.6px;margin-left:4.8px"><path d="M0 8a4 4 0 0 1 7.465-2H14a.5.5 0 0 1 .354.146l1.5 1.5a.5.5 0 0 1 0 .708l-1.5 1.5a.5.5 0 0 1-.708 0L13 9.207l-.646.647a.5.5 0 0 1-.708 0L11 9.207l-.646.647a.5.5 0 0 1-.708 0L9 9.207l-.646.647A.5.5 0 0 1 8 10h-.535A4 4 0 0 1 0 8m4-3a3 3 0 1 0 2.712 4.285A.5.5 0 0 1 7.163 9h.63l.853-.854a.5.5 0 0 1 .708 0l.646.647.646-.647a.5.5 0 0 1 .708 0l.646.647.646-.647a.5.5 0 0 1 .708 0l.646.647.793-.793-1-1h-6.63a.5.5 0 0 1-.451-.285A3 3 0 0 0 4 5"/><path d="M4 8a1 1 0 1 1-2 0 1 1 0 0 1 2 0"/></svg></div>
<div class="t" style="left:873px;top:712.68px;font-size:15.8px;line-height:20px;color:#909294;font-weight:400;">Podmiot 333528<svg width="15.6" height="15.6" viewBox="0 0 16 16" fill="#ffe083" style="vertical-align:-1.6px;margin-left:4.8px"><path d="M0 8a4 4 0 0 1 7.465-2H14a.5.5 0 0 1 .354.146l1.5 1.5a.5.5 0 0 1 0 .708l-1.5 1.5a.5.5 0 0 1-.708 0L13 9.207l-.646.647a.5.5 0 0 1-.708 0L11 9.207l-.646.647a.5.5 0 0 1-.708 0L9 9.207l-.646.647A.5.5 0 0 1 8 10h-.535A4 4 0 0 1 0 8m4-3a3 3 0 1 0 2.712 4.285A.5.5 0 0 1 7.163 9h.63l.853-.854a.5.5 0 0 1 .708 0l.646.647.646-.647a.5.5 0 0 1 .708 0l.646.647.646-.647a.5.5 0 0 1 .708 0l.646.647.793-.793-1-1h-6.63a.5.5 0 0 1-.451-.285A3 3 0 0 0 4 5"/><path d="M4 8a1 1 0 1 1-2 0 1 1 0 0 1 2 0"/></svg></div>
<div class="t" style="left:873px;top:733.17px;font-size:13.5px;line-height:17px;color:#b5b8bb;font-weight:400;">abc 1234</div>
<div class="t" style="left:1446.2px;top:720.81px;font-size:15.4px;line-height:19px;color:#909294;font-weight:400;">02 01 06</div>
<div class="t" style="right:185px;text-align:right;top:712.95px;font-size:15.3px;line-height:19px;color:#909294;font-weight:400;">0.1770</div>
<div class="t" style="right:185px;text-align:right;top:732.47px;font-size:13.5px;line-height:17px;color:#b5b8bb;font-weight:400;">177 kg</div>
<div style="position:absolute;left:1751px;top:714.85px;width:78px;height:31px;box-sizing:border-box;border:1px solid #0d6efd;border-right:none;border-radius:4px 0 0 4px;background:#fff"></div>
<div style="position:absolute;left:1829px;top:714.85px;width:22px;height:31px;background:#0d6efd;border-radius:0 4px 4px 0"></div>
<div class="t" style="left:1761px;top:723.88px;font-size:13.2px;line-height:16px;color:#0d6efd;font-weight:400;">Szczegóły</div>
<div style="position:absolute;left:1835.9px;top:727.85px;width:0;height:0;border-left:4.2px solid transparent;border-right:4.2px solid transparent;border-top:4.2px solid #fff"></div>
<div class="t" style="left:54.2px;top:774.54px;font-size:13.46px;line-height:17px;color:#6c757d;font-weight:400;">2025-07-16 15:20 (P)</div>
<div class="t" style="left:54.2px;top:792.04px;font-size:13.46px;line-height:17px;color:#212529;font-weight:400;">2025-07-16 15:20 (R)</div>
<div class="t" style="left:54.2px;top:809.54px;font-size:13.46px;line-height:17px;color:#a8aaac;font-weight:400;">2025-09-27 04:00 (S)</div>
<div class="t" style="left:329px;width:342px;text-align:center;top:777.63px;font-size:15.8px;line-height:20px;color:#212529;font-weight:400;">00088/2025/KPO/0001/863534826</div>
<div style="position:absolute;left:329px;width:342px;top:797.60px;height:24.4px;display:flex;justify-content:center;align-items:center"><span class="badge" style="background:#6c757d;color:#fff;">WYCOFANE</span></div>
<div class="t" style="left:680.5px;top:790.43px;font-size:15.8px;line-height:20px;color:#212529;font-weight:400;">Podmiot 333528<svg width="15.6" height="15.6" viewBox="0 0 16 16" fill="#ffc107" style="vertical-align:-1.6px;margin-left:4.8px"><path d="M0 8a4 4 0 0 1 7.465-2H14a.5.5 0 0 1 .354.146l1.5 1.5a.5.5 0 0 1 0 .708l-1.5 1.5a.5.5 0 0 1-.708 0L13 9.207l-.646.647a.5.5 0 0 1-.708 0L11 9.207l-.646.647a.5.5 0 0 1-.708 0L9 9.207l-.646.647A.5.5 0 0 1 8 10h-.535A4 4 0 0 1 0 8m4-3a3 3 0 1 0 2.712 4.285A.5.5 0 0 1 7.163 9h.63l.853-.854a.5.5 0 0 1 .708 0l.646.647.646-.647a.5.5 0 0 1 .708 0l.646.647.646-.647a.5.5 0 0 1 .708 0l.646.647.793-.793-1-1h-6.63a.5.5 0 0 1-.451-.285A3 3 0 0 0 4 5"/><path d="M4 8a1 1 0 1 1-2 0 1 1 0 0 1 2 0"/></svg></div>
<div class="t" style="left:1253px;top:790.43px;font-size:15.8px;line-height:20px;color:#212529;font-weight:400;">Podmiot 333528<svg width="15.6" height="15.6" viewBox="0 0 16 16" fill="#ffc107" style="vertical-align:-1.6px;margin-left:4.8px"><path d="M0 8a4 4 0 0 1 7.465-2H14a.5.5 0 0 1 .354.146l1.5 1.5a.5.5 0 0 1 0 .708l-1.5 1.5a.5.5 0 0 1-.708 0L13 9.207l-.646.647a.5.5 0 0 1-.708 0L11 9.207l-.646.647a.5.5 0 0 1-.708 0L9 9.207l-.646.647A.5.5 0 0 1 8 10h-.535A4 4 0 0 1 0 8m4-3a3 3 0 1 0 2.712 4.285A.5.5 0 0 1 7.163 9h.63l.853-.854a.5.5 0 0 1 .708 0l.646.647.646-.647a.5.5 0 0 1 .708 0l.646.647.646-.647a.5.5 0 0 1 .708 0l.646.647.793-.793-1-1h-6.63a.5.5 0 0 1-.451-.285A3 3 0 0 0 4 5"/><path d="M4 8a1 1 0 1 1-2 0 1 1 0 0 1 2 0"/></svg></div>
<div class="t" style="left:873px;top:782.23px;font-size:15.8px;line-height:20px;color:#212529;font-weight:400;">Podmiot 333528<svg width="15.6" height="15.6" viewBox="0 0 16 16" fill="#ffc107" style="vertical-align:-1.6px;margin-left:4.8px"><path d="M0 8a4 4 0 0 1 7.465-2H14a.5.5 0 0 1 .354.146l1.5 1.5a.5.5 0 0 1 0 .708l-1.5 1.5a.5.5 0 0 1-.708 0L13 9.207l-.646.647a.5.5 0 0 1-.708 0L11 9.207l-.646.647a.5.5 0 0 1-.708 0L9 9.207l-.646.647A.5.5 0 0 1 8 10h-.535A4 4 0 0 1 0 8m4-3a3 3 0 1 0 2.712 4.285A.5.5 0 0 1 7.163 9h.63l.853-.854a.5.5 0 0 1 .708 0l.646.647.646-.647a.5.5 0 0 1 .708 0l.646.647.646-.647a.5.5 0 0 1 .708 0l.646.647.793-.793-1-1h-6.63a.5.5 0 0 1-.451-.285A3 3 0 0 0 4 5"/><path d="M4 8a1 1 0 1 1-2 0 1 1 0 0 1 2 0"/></svg></div>
<div class="t" style="left:873px;top:802.72px;font-size:13.5px;line-height:17px;color:#6c757d;font-weight:400;">abc 1234</div>
<div class="t" style="left:1446.2px;top:790.36px;font-size:15.4px;line-height:19px;color:#212529;font-weight:400;">02 01 06</div>
<div class="t" style="right:185px;text-align:right;top:782.50px;font-size:15.3px;line-height:19px;color:#212529;font-weight:400;">0.1200</div>
<div class="t" style="right:185px;text-align:right;top:802.02px;font-size:13.5px;line-height:17px;color:#6c757d;font-weight:400;">120 kg</div>
<div style="position:absolute;left:1751px;top:784.40px;width:78px;height:31px;box-sizing:border-box;border:1px solid #0d6efd;border-right:none;border-radius:4px 0 0 4px;background:#fff"></div>
<div style="position:absolute;left:1829px;top:784.40px;width:22px;height:31px;background:#0d6efd;border-radius:0 4px 4px 0"></div>
<div class="t" style="left:1761px;top:793.43px;font-size:13.2px;line-height:16px;color:#0d6efd;font-weight:400;">Szczegóły</div>
<div style="position:absolute;left:1835.9px;top:797.4000000000001px;width:0;height:0;border-left:4.2px solid transparent;border-right:4.2px solid transparent;border-top:4.2px solid #fff"></div>
<div class="t" style="left:54.2px;top:844.09px;font-size:13.46px;line-height:17px;color:#6c757d;font-weight:400;">2025-07-09 12:20 (P)</div>
<div class="t" style="left:54.2px;top:861.59px;font-size:13.46px;line-height:17px;color:#212529;font-weight:400;">2025-07-09 12:20 (R)</div>
<div class="t" style="left:54.2px;top:879.09px;font-size:13.46px;line-height:17px;color:#a8aaac;font-weight:400;">2025-09-27 04:00 (S)</div>
<div class="t" style="left:329px;width:342px;text-align:center;top:847.18px;font-size:15.8px;line-height:20px;color:#212529;font-weight:400;">00087/2025/KPO/0001/863534826</div>
<div style="position:absolute;left:329px;width:342px;top:867.15px;height:24.4px;display:flex;justify-content:center;align-items:center"><span class="badge" style="background:#fff;color:#198754;border:1px solid #198754;padding:0 7px !important;">POTWIERDZONY TRANSPORT</span></div>
<div class="t" style="left:680.5px;top:859.98px;font-size:15.8px;line-height:20px;color:#212529;font-weight:400;">Podmiot 333528<svg width="15.6" height="15.6" viewBox="0 0 16 16" fill="#ffc107" style="vertical-align:-1.6px;margin-left:4.8px"><path d="M0 8a4 4 0 0 1 7.465-2H14a.5.5 0 0 1 .354.146l1.5 1.5a.5.5 0 0 1 0 .708l-1.5 1.5a.5.5 0 0 1-.708 0L13 9.207l-.646.647a.5.5 0 0 1-.708 0L11 9.207l-.646.647a.5.5 0 0 1-.708 0L9 9.207l-.646.647A.5.5 0 0 1 8 10h-.535A4 4 0 0 1 0 8m4-3a3 3 0 1 0 2.712 4.285A.5.5 0 0 1 7.163 9h.63l.853-.854a.5.5 0 0 1 .708 0l.646.647.646-.647a.5.5 0 0 1 .708 0l.646.647.646-.647a.5.5 0 0 1 .708 0l.646.647.793-.793-1-1h-6.63a.5.5 0 0 1-.451-.285A3 3 0 0 0 4 5"/><path d="M4 8a1 1 0 1 1-2 0 1 1 0 0 1 2 0"/></svg></div>
<div class="t" style="left:1253px;top:859.98px;font-size:15.8px;line-height:20px;color:#212529;font-weight:400;">Podmiot 333528<svg width="15.6" height="15.6" viewBox="0 0 16 16" fill="#ffc107" style="vertical-align:-1.6px;margin-left:4.8px"><path d="M0 8a4 4 0 0 1 7.465-2H14a.5.5 0 0 1 .354.146l1.5 1.5a.5.5 0 0 1 0 .708l-1.5 1.5a.5.5 0 0 1-.708 0L13 9.207l-.646.647a.5.5 0 0 1-.708 0L11 9.207l-.646.647a.5.5 0 0 1-.708 0L9 9.207l-.646.647A.5.5 0 0 1 8 10h-.535A4 4 0 0 1 0 8m4-3a3 3 0 1 0 2.712 4.285A.5.5 0 0 1 7.163 9h.63l.853-.854a.5.5 0 0 1 .708 0l.646.647.646-.647a.5.5 0 0 1 .708 0l.646.647.646-.647a.5.5 0 0 1 .708 0l.646.647.793-.793-1-1h-6.63a.5.5 0 0 1-.451-.285A3 3 0 0 0 4 5"/><path d="M4 8a1 1 0 1 1-2 0 1 1 0 0 1 2 0"/></svg></div>
<div class="t" style="left:873px;top:851.78px;font-size:15.8px;line-height:20px;color:#212529;font-weight:400;">Podmiot 333528<svg width="15.6" height="15.6" viewBox="0 0 16 16" fill="#ffc107" style="vertical-align:-1.6px;margin-left:4.8px"><path d="M0 8a4 4 0 0 1 7.465-2H14a.5.5 0 0 1 .354.146l1.5 1.5a.5.5 0 0 1 0 .708l-1.5 1.5a.5.5 0 0 1-.708 0L13 9.207l-.646.647a.5.5 0 0 1-.708 0L11 9.207l-.646.647a.5.5 0 0 1-.708 0L9 9.207l-.646.647A.5.5 0 0 1 8 10h-.535A4 4 0 0 1 0 8m4-3a3 3 0 1 0 2.712 4.285A.5.5 0 0 1 7.163 9h.63l.853-.854a.5.5 0 0 1 .708 0l.646.647.646-.647a.5.5 0 0 1 .708 0l.646.647.646-.647a.5.5 0 0 1 .708 0l.646.647.793-.793-1-1h-6.63a.5.5 0 0 1-.451-.285A3 3 0 0 0 4 5"/><path d="M4 8a1 1 0 1 1-2 0 1 1 0 0 1 2 0"/></svg></div>
<div class="t" style="left:873px;top:872.27px;font-size:13.5px;line-height:17px;color:#6c757d;font-weight:400;">abc 1234</div>
<div class="t" style="left:1446.2px;top:859.91px;font-size:15.4px;line-height:19px;color:#212529;font-weight:400;">02 01 06</div>
<div class="t" style="right:185px;text-align:right;top:852.05px;font-size:15.3px;line-height:19px;color:#212529;font-weight:400;">0.1234</div>
<div class="t" style="right:185px;text-align:right;top:871.57px;font-size:13.5px;line-height:17px;color:#6c757d;font-weight:400;">123.4 kg</div>
<div style="position:absolute;left:1751px;top:853.95px;width:78px;height:31px;box-sizing:border-box;border:1px solid #0d6efd;border-right:none;border-radius:4px 0 0 4px;background:#fff"></div>
<div style="position:absolute;left:1829px;top:853.95px;width:22px;height:31px;background:#0d6efd;border-radius:0 4px 4px 0"></div>
<div class="t" style="left:1761px;top:862.98px;font-size:13.2px;line-height:16px;color:#0d6efd;font-weight:400;">Szczegóły</div>
<div style="position:absolute;left:1835.9px;top:866.95px;width:0;height:0;border-left:4.2px solid transparent;border-right:4.2px solid transparent;border-top:4.2px solid #fff"></div>
<div class="t" style="left:54.2px;top:913.64px;font-size:13.46px;line-height:17px;color:#6c757d;font-weight:400;">2025-07-07 20:22 (P)</div>
<div class="t" style="left:54.2px;top:931.14px;font-size:13.46px;line-height:17px;color:#212529;font-weight:400;">2025-07-07 20:22 (R)</div>
<div class="t" style="left:54.2px;top:948.64px;font-size:13.46px;line-height:17px;color:#a8aaac;font-weight:400;">2025-09-27 04:00 (S)</div>
<div class="t" style="left:329px;width:342px;text-align:center;top:916.73px;font-size:15.8px;line-height:20px;color:#212529;font-weight:400;">00085/2025/KPO/0001/863534826</div>
<div style="position:absolute;left:329px;width:342px;top:936.70px;height:24.4px;display:flex;justify-content:center;align-items:center"><span class="badge" style="background:#0d6efd;color:#fff;">POTWIERDZENIE WYGENEROWANE</span></div>
<div class="t" style="left:680.5px;top:929.53px;font-size:15.8px;line-height:20px;color:#212529;font-weight:400;">Podmiot 333528<svg width="15.6" height="15.6" viewBox="0 0 16 16" fill="#ffc107" style="vertical-align:-1.6px;margin-left:4.8px"><path d="M0 8a4 4 0 0 1 7.465-2H14a.5.5 0 0 1 .354.146l1.5 1.5a.5.5 0 0 1 0 .708l-1.5 1.5a.5.5 0 0 1-.708 0L13 9.207l-.646.647a.5.5 0 0 1-.708 0L11 9.207l-.646.647a.5.5 0 0 1-.708 0L9 9.207l-.646.647A.5.5 0 0 1 8 10h-.535A4 4 0 0 1 0 8m4-3a3 3 0 1 0 2.712 4.285A.5.5 0 0 1 7.163 9h.63l.853-.854a.5.5 0 0 1 .708 0l.646.647.646-.647a.5.5 0 0 1 .708 0l.646.647.646-.647a.5.5 0 0 1 .708 0l.646.647.793-.793-1-1h-6.63a.5.5 0 0 1-.451-.285A3 3 0 0 0 4 5"/><path d="M4 8a1 1 0 1 1-2 0 1 1 0 0 1 2 0"/></svg></div>
<div class="t" style="left:1253px;top:929.53px;font-size:15.8px;line-height:20px;color:#212529;font-weight:400;">Podmiot 333528<svg width="15.6" height="15.6" viewBox="0 0 16 16" fill="#ffc107" style="vertical-align:-1.6px;margin-left:4.8px"><path d="M0 8a4 4 0 0 1 7.465-2H14a.5.5 0 0 1 .354.146l1.5 1.5a.5.5 0 0 1 0 .708l-1.5 1.5a.5.5 0 0 1-.708 0L13 9.207l-.646.647a.5.5 0 0 1-.708 0L11 9.207l-.646.647a.5.5 0 0 1-.708 0L9 9.207l-.646.647A.5.5 0 0 1 8 10h-.535A4 4 0 0 1 0 8m4-3a3 3 0 1 0 2.712 4.285A.5.5 0 0 1 7.163 9h.63l.853-.854a.5.5 0 0 1 .708 0l.646.647.646-.647a.5.5 0 0 1 .708 0l.646.647.646-.647a.5.5 0 0 1 .708 0l.646.647.793-.793-1-1h-6.63a.5.5 0 0 1-.451-.285A3 3 0 0 0 4 5"/><path d="M4 8a1 1 0 1 1-2 0 1 1 0 0 1 2 0"/></svg></div>
<div class="t" style="left:873px;top:921.33px;font-size:15.8px;line-height:20px;color:#212529;font-weight:400;">Podmiot 333528<svg width="15.6" height="15.6" viewBox="0 0 16 16" fill="#ffc107" style="vertical-align:-1.6px;margin-left:4.8px"><path d="M0 8a4 4 0 0 1 7.465-2H14a.5.5 0 0 1 .354.146l1.5 1.5a.5.5 0 0 1 0 .708l-1.5 1.5a.5.5 0 0 1-.708 0L13 9.207l-.646.647a.5.5 0 0 1-.708 0L11 9.207l-.646.647a.5.5 0 0 1-.708 0L9 9.207l-.646.647A.5.5 0 0 1 8 10h-.535A4 4 0 0 1 0 8m4-3a3 3 0 1 0 2.712 4.285A.5.5 0 0 1 7.163 9h.63l.853-.854a.5.5 0 0 1 .708 0l.646.647.646-.647a.5.5 0 0 1 .708 0l.646.647.646-.647a.5.5 0 0 1 .708 0l.646.647.793-.793-1-1h-6.63a.5.5 0 0 1-.451-.285A3 3 0 0 0 4 5"/><path d="M4 8a1 1 0 1 1-2 0 1 1 0 0 1 2 0"/></svg></div>
<div class="t" style="left:873px;top:941.82px;font-size:13.5px;line-height:17px;color:#6c757d;font-weight:400;">123SB1</div>
<div class="t" style="left:1446.2px;top:929.46px;font-size:15.4px;line-height:19px;color:#212529;font-weight:400;">05 01 12*</div>
<div class="t" style="right:185px;text-align:right;top:921.60px;font-size:15.3px;line-height:19px;color:#212529;font-weight:400;">1.0000</div>
<div class="t" style="right:185px;text-align:right;top:941.12px;font-size:13.5px;line-height:17px;color:#6c757d;font-weight:400;">1 t</div>
<div style="position:absolute;left:1751px;top:923.50px;width:78px;height:31px;box-sizing:border-box;border:1px solid #0d6efd;border-right:none;border-radius:4px 0 0 4px;background:#fff"></div>
<div style="position:absolute;left:1829px;top:923.50px;width:22px;height:31px;background:#0d6efd;border-radius:0 4px 4px 0"></div>
<div class="t" style="left:1761px;top:932.53px;font-size:13.2px;line-height:16px;color:#0d6efd;font-weight:400;">Szczegóły</div>
<div style="position:absolute;left:1835.9px;top:936.5px;width:0;height:0;border-left:4.2px solid transparent;border-right:4.2px solid transparent;border-top:4.2px solid #fff"></div>
<div class="t" style="left:54.2px;top:983.19px;font-size:13.46px;line-height:17px;color:#6c757d;font-weight:400;">2025-07-03 15:15 (P)</div>
<div class="t" style="left:54.2px;top:1000.69px;font-size:13.46px;line-height:17px;color:#212529;font-weight:400;">2025-07-03 15:15 (R)</div>
<div class="t" style="left:54.2px;top:1018.19px;font-size:13.46px;line-height:17px;color:#a8aaac;font-weight:400;">2025-09-27 04:00 (S)</div>
<div class="t" style="left:329px;width:342px;text-align:center;top:986.28px;font-size:15.8px;line-height:20px;color:#212529;font-weight:400;">00086/2025/KPO/0001/863534826</div>
<div style="position:absolute;left:329px;width:342px;top:1006.25px;height:24.4px;display:flex;justify-content:center;align-items:center"><span class="badge" style="background:#fff;color:#198754;border:1px solid #198754;padding:0 7px !important;">POTWIERDZONY TRANSPORT</span></div>
<div class="t" style="left:680.5px;top:999.08px;font-size:15.8px;line-height:20px;color:#212529;font-weight:400;">Podmiot 333528<svg width="15.6" height="15.6" viewBox="0 0 16 16" fill="#ffc107" style="vertical-align:-1.6px;margin-left:4.8px"><path d="M0 8a4 4 0 0 1 7.465-2H14a.5.5 0 0 1 .354.146l1.5 1.5a.5.5 0 0 1 0 .708l-1.5 1.5a.5.5 0 0 1-.708 0L13 9.207l-.646.647a.5.5 0 0 1-.708 0L11 9.207l-.646.647a.5.5 0 0 1-.708 0L9 9.207l-.646.647A.5.5 0 0 1 8 10h-.535A4 4 0 0 1 0 8m4-3a3 3 0 1 0 2.712 4.285A.5.5 0 0 1 7.163 9h.63l.853-.854a.5.5 0 0 1 .708 0l.646.647.646-.647a.5.5 0 0 1 .708 0l.646.647.646-.647a.5.5 0 0 1 .708 0l.646.647.793-.793-1-1h-6.63a.5.5 0 0 1-.451-.285A3 3 0 0 0 4 5"/><path d="M4 8a1 1 0 1 1-2 0 1 1 0 0 1 2 0"/></svg></div>
<div class="t" style="left:1253px;top:999.08px;font-size:15.8px;line-height:20px;color:#212529;font-weight:400;">Podmiot 333528<svg width="15.6" height="15.6" viewBox="0 0 16 16" fill="#ffc107" style="vertical-align:-1.6px;margin-left:4.8px"><path d="M0 8a4 4 0 0 1 7.465-2H14a.5.5 0 0 1 .354.146l1.5 1.5a.5.5 0 0 1 0 .708l-1.5 1.5a.5.5 0 0 1-.708 0L13 9.207l-.646.647a.5.5 0 0 1-.708 0L11 9.207l-.646.647a.5.5 0 0 1-.708 0L9 9.207l-.646.647A.5.5 0 0 1 8 10h-.535A4 4 0 0 1 0 8m4-3a3 3 0 1 0 2.712 4.285A.5.5 0 0 1 7.163 9h.63l.853-.854a.5.5 0 0 1 .708 0l.646.647.646-.647a.5.5 0 0 1 .708 0l.646.647.646-.647a.5.5 0 0 1 .708 0l.646.647.793-.793-1-1h-6.63a.5.5 0 0 1-.451-.285A3 3 0 0 0 4 5"/><path d="M4 8a1 1 0 1 1-2 0 1 1 0 0 1 2 0"/></svg></div>
<div class="t" style="left:873px;top:990.88px;font-size:15.8px;line-height:20px;color:#212529;font-weight:400;">Podmiot 333528<svg width="15.6" height="15.6" viewBox="0 0 16 16" fill="#ffc107" style="vertical-align:-1.6px;margin-left:4.8px"><path d="M0 8a4 4 0 0 1 7.465-2H14a.5.5 0 0 1 .354.146l1.5 1.5a.5.5 0 0 1 0 .708l-1.5 1.5a.5.5 0 0 1-.708 0L13 9.207l-.646.647a.5.5 0 0 1-.708 0L11 9.207l-.646.647a.5.5 0 0 1-.708 0L9 9.207l-.646.647A.5.5 0 0 1 8 10h-.535A4 4 0 0 1 0 8m4-3a3 3 0 1 0 2.712 4.285A.5.5 0 0 1 7.163 9h.63l.853-.854a.5.5 0 0 1 .708 0l.646.647.646-.647a.5.5 0 0 1 .708 0l.646.647.646-.647a.5.5 0 0 1 .708 0l.646.647.793-.793-1-1h-6.63a.5.5 0 0 1-.451-.285A3 3 0 0 0 4 5"/><path d="M4 8a1 1 0 1 1-2 0 1 1 0 0 1 2 0"/></svg></div>
<div class="t" style="left:873px;top:1011.37px;font-size:13.5px;line-height:17px;color:#6c757d;font-weight:400;">ABBCCC</div>
<div class="t" style="left:1446.2px;top:999.01px;font-size:15.4px;line-height:19px;color:#212529;font-weight:400;">10 08 04</div>
<div class="t" style="right:185px;text-align:right;top:991.15px;font-size:15.3px;line-height:19px;color:#212529;font-weight:400;">14.1500</div>
<div class="t" style="right:185px;text-align:right;top:1010.67px;font-size:13.5px;line-height:17px;color:#6c757d;font-weight:400;">14.15 t</div>
<div style="position:absolute;left:1751px;top:993.05px;width:78px;height:31px;box-sizing:border-box;border:1px solid #0d6efd;border-right:none;border-radius:4px 0 0 4px;background:#fff"></div>
<div style="position:absolute;left:1829px;top:993.05px;width:22px;height:31px;background:#0d6efd;border-radius:0 4px 4px 0"></div>
<div class="t" style="left:1761px;top:1002.08px;font-size:13.2px;line-height:16px;color:#0d6efd;font-weight:400;">Szczegóły</div>
<div style="position:absolute;left:1835.9px;top:1006.0500000000001px;width:0;height:0;border-left:4.2px solid transparent;border-right:4.2px solid transparent;border-top:4.2px solid #fff"></div>
<div class="t" style="left:54.2px;top:1053.29px;font-size:13.46px;line-height:17px;color:#212529;font-weight:400;">2025-06-23 14:30 (P)</div>
<div class="t" style="left:54.2px;top:1070.79px;font-size:13.46px;line-height:17px;color:#a8aaac;font-weight:400;">2025-09-27 04:00 (S)</div>
<div style="position:absolute;left:329px;width:342px;top:1058.00px;height:24.4px;display:flex;justify-content:center;align-items:center"><span class="badge" style="background:#f8f9fa;color:#212529;">PLANOWANE</span><svg width="15.4" height="15.4" viewBox="0 0 16 16" fill="#212529" style="margin-left:3.5px;flex:none"><path d="M2.5 1A1.5 1.5 0 0 0 1 2.5v11A1.5 1.5 0 0 0 2.5 15h6.086a1.5 1.5 0 0 0 1.06-.44l4.915-4.914A1.5 1.5 0 0 0 15 8.586V2.5A1.5 1.5 0 0 0 13.5 1zM2 2.5a.5.5 0 0 1 .5-.5h11a.5.5 0 0 1 .5.5V8H9.5A1.5 1.5 0 0 0 8 9.5V14H2.5a.5.5 0 0 1-.5-.5zm7 11.293V9.5a.5.5 0 0 1 .5-.5h4.293z"/></svg></div>
<div class="t" style="left:680.5px;top:1060.93px;font-size:15.8px;line-height:20px;color:#212529;font-weight:400;">Podmiot 333528<svg width="15.6" height="15.6" viewBox="0 0 16 16" fill="#ffc107" style="vertical-align:-1.6px;margin-left:4.8px"><path d="M0 8a4 4 0 0 1 7.465-2H14a.5.5 0 0 1 .354.146l1.5 1.5a.5.5 0 0 1 0 .708l-1.5 1.5a.5.5 0 0 1-.708 0L13 9.207l-.646.647a.5.5 0 0 1-.708 0L11 9.207l-.646.647a.5.5 0 0 1-.708 0L9 9.207l-.646.647A.5.5 0 0 1 8 10h-.535A4 4 0 0 1 0 8m4-3a3 3 0 1 0 2.712 4.285A.5.5 0 0 1 7.163 9h.63l.853-.854a.5.5 0 0 1 .708 0l.646.647.646-.647a.5.5 0 0 1 .708 0l.646.647.646-.647a.5.5 0 0 1 .708 0l.646.647.793-.793-1-1h-6.63a.5.5 0 0 1-.451-.285A3 3 0 0 0 4 5"/><path d="M4 8a1 1 0 1 1-2 0 1 1 0 0 1 2 0"/></svg></div>
<div class="t" style="left:1253px;top:1060.93px;font-size:15.8px;line-height:20px;color:#212529;font-weight:400;">Podmiot 333528<svg width="15.6" height="15.6" viewBox="0 0 16 16" fill="#ffc107" style="vertical-align:-1.6px;margin-left:4.8px"><path d="M0 8a4 4 0 0 1 7.465-2H14a.5.5 0 0 1 .354.146l1.5 1.5a.5.5 0 0 1 0 .708l-1.5 1.5a.5.5 0 0 1-.708 0L13 9.207l-.646.647a.5.5 0 0 1-.708 0L11 9.207l-.646.647a.5.5 0 0 1-.708 0L9 9.207l-.646.647A.5.5 0 0 1 8 10h-.535A4 4 0 0 1 0 8m4-3a3 3 0 1 0 2.712 4.285A.5.5 0 0 1 7.163 9h.63l.853-.854a.5.5 0 0 1 .708 0l.646.647.646-.647a.5.5 0 0 1 .708 0l.646.647.646-.647a.5.5 0 0 1 .708 0l.646.647.793-.793-1-1h-6.63a.5.5 0 0 1-.451-.285A3 3 0 0 0 4 5"/><path d="M4 8a1 1 0 1 1-2 0 1 1 0 0 1 2 0"/></svg></div>
<div class="t" style="left:873px;top:1052.73px;font-size:15.8px;line-height:20px;color:#212529;font-weight:400;">Podmiot 333528<svg width="15.6" height="15.6" viewBox="0 0 16 16" fill="#ffc107" style="vertical-align:-1.6px;margin-left:4.8px"><path d="M0 8a4 4 0 0 1 7.465-2H14a.5.5 0 0 1 .354.146l1.5 1.5a.5.5 0 0 1 0 .708l-1.5 1.5a.5.5 0 0 1-.708 0L13 9.207l-.646.647a.5.5 0 0 1-.708 0L11 9.207l-.646.647a.5.5 0 0 1-.708 0L9 9.207l-.646.647A.5.5 0 0 1 8 10h-.535A4 4 0 0 1 0 8m4-3a3 3 0 1 0 2.712 4.285A.5.5 0 0 1 7.163 9h.63l.853-.854a.5.5 0 0 1 .708 0l.646.647.646-.647a.5.5 0 0 1 .708 0l.646.647.646-.647a.5.5 0 0 1 .708 0l.646.647.793-.793-1-1h-6.63a.5.5 0 0 1-.451-.285A3 3 0 0 0 4 5"/><path d="M4 8a1 1 0 1 1-2 0 1 1 0 0 1 2 0"/></svg></div>
<div class="t" style="left:873px;top:1073.22px;font-size:13.5px;line-height:17px;color:#6c757d;font-weight:400;">kwa 2120, KWA 4123</div>
<div class="t" style="left:1446.2px;top:1060.86px;font-size:15.4px;line-height:19px;color:#212529;font-weight:400;">01 01 80</div>
<div class="t" style="right:185px;text-align:right;top:1053.00px;font-size:15.3px;line-height:19px;color:#212529;font-weight:400;">123.1230</div>
<div class="t" style="right:185px;text-align:right;top:1072.52px;font-size:13.5px;line-height:17px;color:#6c757d;font-weight:400;">123.123 t</div>
<div style="position:absolute;left:1751px;top:1054.90px;width:78px;height:31px;box-sizing:border-box;border:1px solid #0d6efd;border-right:none;border-radius:4px 0 0 4px;background:#fff"></div>
<div style="position:absolute;left:1829px;top:1054.90px;width:22px;height:31px;background:#0d6efd;border-radius:0 4px 4px 0"></div>
<div class="t" style="left:1761px;top:1063.93px;font-size:13.2px;line-height:16px;color:#0d6efd;font-weight:400;">Szczegóły</div>
<div style="position:absolute;left:1835.9px;top:1067.9px;width:0;height:0;border-left:4.2px solid transparent;border-right:4.2px solid transparent;border-top:4.2px solid #fff"></div>
</body></html>
